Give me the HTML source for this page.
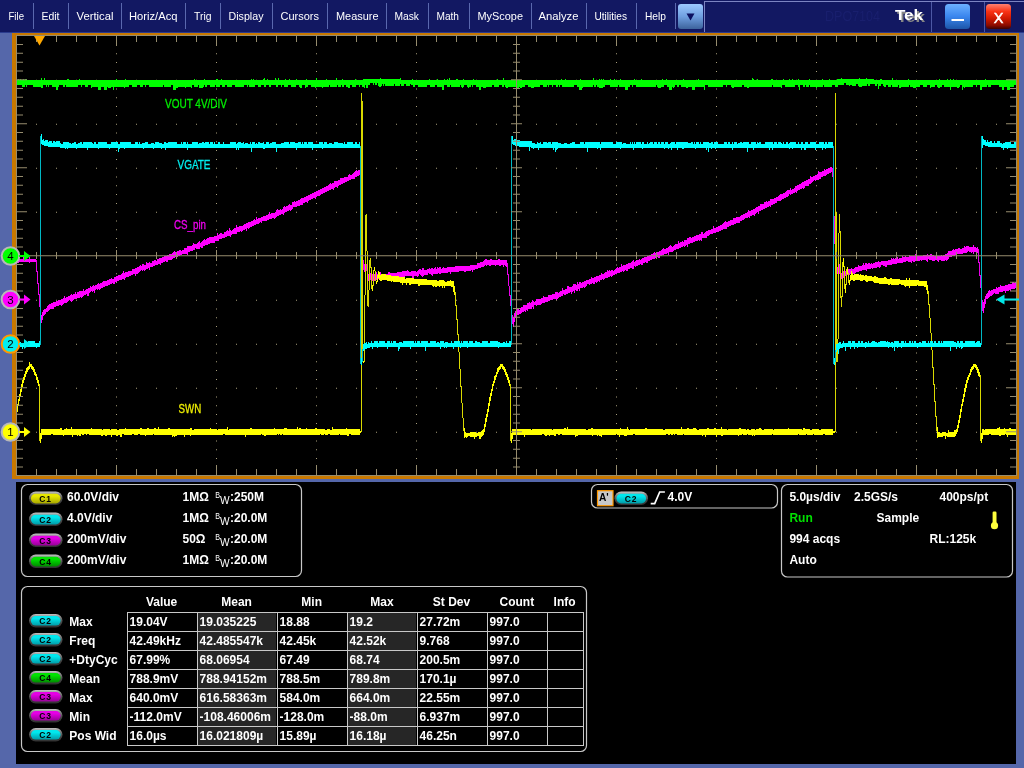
<!DOCTYPE html>
<html lang="en"><head><meta charset="utf-8"><title>Tek DPO7104</title>
<style>html,body{margin:0;padding:0;background:#5567aa;overflow:hidden}svg{display:block}text{font-family:"Liberation Sans", Arial, sans-serif}.m{font-size:11px;fill:#fff}.b{font-size:12px;font-weight:bold;fill:#fff}.pl{font-size:8.5px;font-weight:bold;fill:#000;letter-spacing:0.8px}.ce{shape-rendering:crispEdges}</style></head><body>
<svg width="1024" height="768" viewBox="0 0 1024 768" style="will-change:transform">
<defs>
<linearGradient id="gDrop" x1="0" y1="0" x2="0" y2="1"><stop offset="0" stop-color="#9cc8ff"/><stop offset="0.5" stop-color="#6f9fe0"/><stop offset="1" stop-color="#3d639c"/></linearGradient>
<linearGradient id="gMin" x1="0" y1="0" x2="0" y2="1"><stop offset="0" stop-color="#6cb0ff"/><stop offset="0.5" stop-color="#3a86ee"/><stop offset="1" stop-color="#1d55a8"/></linearGradient>
<linearGradient id="gCls" x1="0" y1="0" x2="0" y2="1"><stop offset="0" stop-color="#ff8070"/><stop offset="0.3" stop-color="#fa3214"/><stop offset="0.6" stop-color="#cc1800"/><stop offset="0.85" stop-color="#8c0c00"/><stop offset="1" stop-color="#400000"/></linearGradient>
<linearGradient id="gRim" x1="0" y1="0" x2="0" y2="1"><stop offset="0" stop-color="#c4c4c4"/><stop offset="0.3" stop-color="#7c7c7c"/><stop offset="0.6" stop-color="#484848"/><stop offset="1" stop-color="#303030"/></linearGradient>
<linearGradient id="gP1" x1="0" y1="0" x2="0" y2="1"><stop offset="0" stop-color="#e8e800"/><stop offset="0.25" stop-color="#e8e800"/><stop offset="1" stop-color="#a8a800"/></linearGradient>
<linearGradient id="gP2" x1="0" y1="0" x2="0" y2="1"><stop offset="0" stop-color="#00e8ee"/><stop offset="0.25" stop-color="#00e8ee"/><stop offset="1" stop-color="#009ca8"/></linearGradient>
<linearGradient id="gP3" x1="0" y1="0" x2="0" y2="1"><stop offset="0" stop-color="#e600e6"/><stop offset="0.25" stop-color="#e600e6"/><stop offset="1" stop-color="#980098"/></linearGradient>
<linearGradient id="gP4" x1="0" y1="0" x2="0" y2="1"><stop offset="0" stop-color="#00e200"/><stop offset="0.25" stop-color="#00e200"/><stop offset="1" stop-color="#008c00"/></linearGradient>
<filter id="sh" x="-10%" y="-10%" width="130%" height="140%"><feDropShadow dx="2" dy="2" stdDeviation="0.01" flood-color="#868686" flood-opacity="1"/></filter>
</defs>
<rect width="1024" height="768" fill="#5567aa"/>
<g class="ce">
<rect x="0" y="0" width="1024" height="32" fill="#121862"/>
<rect x="0" y="32" width="1024" height="1" fill="#2b3c8e"/>
<rect x="704" y="1" width="320" height="1" fill="#7c84c2"/>
<rect x="704" y="1" width="1" height="31" fill="#7c84c2"/>
<rect x="33" y="3" width="1" height="26" fill="#5a68ae"/>
<rect x="68" y="3" width="1" height="26" fill="#5a68ae"/>
<rect x="121" y="3" width="1" height="26" fill="#5a68ae"/>
<rect x="185" y="3" width="1" height="26" fill="#5a68ae"/>
<rect x="220" y="3" width="1" height="26" fill="#5a68ae"/>
<rect x="272" y="3" width="1" height="26" fill="#5a68ae"/>
<rect x="327" y="3" width="1" height="26" fill="#5a68ae"/>
<rect x="386" y="3" width="1" height="26" fill="#5a68ae"/>
<rect x="428" y="3" width="1" height="26" fill="#5a68ae"/>
<rect x="469" y="3" width="1" height="26" fill="#5a68ae"/>
<rect x="531" y="3" width="1" height="26" fill="#5a68ae"/>
<rect x="586" y="3" width="1" height="26" fill="#5a68ae"/>
<rect x="636" y="3" width="1" height="26" fill="#5a68ae"/>
<rect x="675" y="3" width="1" height="26" fill="#5a68ae"/>
<rect x="931" y="2" width="1" height="30" fill="#4c58a4"/>
<rect x="984" y="2" width="1" height="30" fill="#4c58a4"/>
</g>
<text class="m" x="8.5" y="19.8" textLength="15.5" lengthAdjust="spacingAndGlyphs">File</text>
<text class="m" x="41.5" y="19.8" textLength="18.0" lengthAdjust="spacingAndGlyphs">Edit</text>
<text class="m" x="76.5" y="19.8" textLength="37.0" lengthAdjust="spacingAndGlyphs">Vertical</text>
<text class="m" x="129.0" y="19.8" textLength="48.5" lengthAdjust="spacingAndGlyphs">Horiz/Acq</text>
<text class="m" x="194.0" y="19.8" textLength="17.5" lengthAdjust="spacingAndGlyphs">Trig</text>
<text class="m" x="228.5" y="19.8" textLength="35.0" lengthAdjust="spacingAndGlyphs">Display</text>
<text class="m" x="280.5" y="19.8" textLength="38.5" lengthAdjust="spacingAndGlyphs">Cursors</text>
<text class="m" x="336.0" y="19.8" textLength="42.5" lengthAdjust="spacingAndGlyphs">Measure</text>
<text class="m" x="394.5" y="19.8" textLength="24.5" lengthAdjust="spacingAndGlyphs">Mask</text>
<text class="m" x="436.5" y="19.8" textLength="22.5" lengthAdjust="spacingAndGlyphs">Math</text>
<text class="m" x="477.5" y="19.8" textLength="45.5" lengthAdjust="spacingAndGlyphs">MyScope</text>
<text class="m" x="538.5" y="19.8" textLength="40.0" lengthAdjust="spacingAndGlyphs">Analyze</text>
<text class="m" x="594.5" y="19.8" textLength="32.5" lengthAdjust="spacingAndGlyphs">Utilities</text>
<text class="m" x="645.0" y="19.8" textLength="21.0" lengthAdjust="spacingAndGlyphs">Help</text>
<rect x="678" y="4" width="25" height="25" rx="3" fill="url(#gDrop)"/>
<path d="M686.5 13.5h8l-4 7z" fill="#0c1060"/>
<text x="825" y="21" font-size="14" fill="#191f6e" textLength="55" lengthAdjust="spacingAndGlyphs">DPO7104</text>
<text x="895" y="19.5" font-size="15" font-weight="bold" fill="#ffffff" filter="url(#sh)" textLength="28" lengthAdjust="spacingAndGlyphs">Tek</text>
<rect x="945" y="4" width="25" height="25" rx="3.5" fill="url(#gMin)"/>
<rect x="951.5" y="19" width="12.5" height="2" fill="#fff"/>
<rect x="986" y="4" width="25" height="25" rx="3.5" fill="url(#gCls)"/>
<text x="998.5" y="22.7" font-size="14.5" fill="#fff" stroke="#fff" stroke-width="0.45" text-anchor="middle">X</text>
<g class="ce">
<rect x="12" y="33" width="1007" height="446" fill="#c87800"/>
<rect x="16" y="35" width="1001" height="441" fill="#968c6e"/>
<rect x="17" y="36" width="999" height="439" fill="#000"/>
<rect x="16" y="482" width="1000" height="282" fill="#000"/>
</g>
<path d="M36 79.7h1v1h-1zM56 79.7h1v1h-1zM76 79.7h1v1h-1zM96 79.7h1v1h-1zM116 79.7h1v1h-1zM136 79.7h1v1h-1zM156 79.7h1v1h-1zM176 79.7h1v1h-1zM196 79.7h1v1h-1zM216 79.7h1v1h-1zM236 79.7h1v1h-1zM256 79.7h1v1h-1zM276 79.7h1v1h-1zM296 79.7h1v1h-1zM316 79.7h1v1h-1zM336 79.7h1v1h-1zM356 79.7h1v1h-1zM376 79.7h1v1h-1zM396 79.7h1v1h-1zM416 79.7h1v1h-1zM436 79.7h1v1h-1zM456 79.7h1v1h-1zM476 79.7h1v1h-1zM496 79.7h1v1h-1zM516 79.7h1v1h-1zM536 79.7h1v1h-1zM556 79.7h1v1h-1zM576 79.7h1v1h-1zM596 79.7h1v1h-1zM616 79.7h1v1h-1zM636 79.7h1v1h-1zM656 79.7h1v1h-1zM676 79.7h1v1h-1zM696 79.7h1v1h-1zM716 79.7h1v1h-1zM736 79.7h1v1h-1zM756 79.7h1v1h-1zM776 79.7h1v1h-1zM796 79.7h1v1h-1zM816 79.7h1v1h-1zM836 79.7h1v1h-1zM856 79.7h1v1h-1zM876 79.7h1v1h-1zM896 79.7h1v1h-1zM916 79.7h1v1h-1zM936 79.7h1v1h-1zM956 79.7h1v1h-1zM976 79.7h1v1h-1zM996 79.7h1v1h-1zM36 123.7h1v1h-1zM56 123.7h1v1h-1zM76 123.7h1v1h-1zM96 123.7h1v1h-1zM116 123.7h1v1h-1zM136 123.7h1v1h-1zM156 123.7h1v1h-1zM176 123.7h1v1h-1zM196 123.7h1v1h-1zM216 123.7h1v1h-1zM236 123.7h1v1h-1zM256 123.7h1v1h-1zM276 123.7h1v1h-1zM296 123.7h1v1h-1zM316 123.7h1v1h-1zM336 123.7h1v1h-1zM356 123.7h1v1h-1zM376 123.7h1v1h-1zM396 123.7h1v1h-1zM416 123.7h1v1h-1zM436 123.7h1v1h-1zM456 123.7h1v1h-1zM476 123.7h1v1h-1zM496 123.7h1v1h-1zM516 123.7h1v1h-1zM536 123.7h1v1h-1zM556 123.7h1v1h-1zM576 123.7h1v1h-1zM596 123.7h1v1h-1zM616 123.7h1v1h-1zM636 123.7h1v1h-1zM656 123.7h1v1h-1zM676 123.7h1v1h-1zM696 123.7h1v1h-1zM716 123.7h1v1h-1zM736 123.7h1v1h-1zM756 123.7h1v1h-1zM776 123.7h1v1h-1zM796 123.7h1v1h-1zM816 123.7h1v1h-1zM836 123.7h1v1h-1zM856 123.7h1v1h-1zM876 123.7h1v1h-1zM896 123.7h1v1h-1zM916 123.7h1v1h-1zM936 123.7h1v1h-1zM956 123.7h1v1h-1zM976 123.7h1v1h-1zM996 123.7h1v1h-1zM36 167.7h1v1h-1zM56 167.7h1v1h-1zM76 167.7h1v1h-1zM96 167.7h1v1h-1zM116 167.7h1v1h-1zM136 167.7h1v1h-1zM156 167.7h1v1h-1zM176 167.7h1v1h-1zM196 167.7h1v1h-1zM216 167.7h1v1h-1zM236 167.7h1v1h-1zM256 167.7h1v1h-1zM276 167.7h1v1h-1zM296 167.7h1v1h-1zM316 167.7h1v1h-1zM336 167.7h1v1h-1zM356 167.7h1v1h-1zM376 167.7h1v1h-1zM396 167.7h1v1h-1zM416 167.7h1v1h-1zM436 167.7h1v1h-1zM456 167.7h1v1h-1zM476 167.7h1v1h-1zM496 167.7h1v1h-1zM516 167.7h1v1h-1zM536 167.7h1v1h-1zM556 167.7h1v1h-1zM576 167.7h1v1h-1zM596 167.7h1v1h-1zM616 167.7h1v1h-1zM636 167.7h1v1h-1zM656 167.7h1v1h-1zM676 167.7h1v1h-1zM696 167.7h1v1h-1zM716 167.7h1v1h-1zM736 167.7h1v1h-1zM756 167.7h1v1h-1zM776 167.7h1v1h-1zM796 167.7h1v1h-1zM816 167.7h1v1h-1zM836 167.7h1v1h-1zM856 167.7h1v1h-1zM876 167.7h1v1h-1zM896 167.7h1v1h-1zM916 167.7h1v1h-1zM936 167.7h1v1h-1zM956 167.7h1v1h-1zM976 167.7h1v1h-1zM996 167.7h1v1h-1zM36 211.7h1v1h-1zM56 211.7h1v1h-1zM76 211.7h1v1h-1zM96 211.7h1v1h-1zM116 211.7h1v1h-1zM136 211.7h1v1h-1zM156 211.7h1v1h-1zM176 211.7h1v1h-1zM196 211.7h1v1h-1zM216 211.7h1v1h-1zM236 211.7h1v1h-1zM256 211.7h1v1h-1zM276 211.7h1v1h-1zM296 211.7h1v1h-1zM316 211.7h1v1h-1zM336 211.7h1v1h-1zM356 211.7h1v1h-1zM376 211.7h1v1h-1zM396 211.7h1v1h-1zM416 211.7h1v1h-1zM436 211.7h1v1h-1zM456 211.7h1v1h-1zM476 211.7h1v1h-1zM496 211.7h1v1h-1zM516 211.7h1v1h-1zM536 211.7h1v1h-1zM556 211.7h1v1h-1zM576 211.7h1v1h-1zM596 211.7h1v1h-1zM616 211.7h1v1h-1zM636 211.7h1v1h-1zM656 211.7h1v1h-1zM676 211.7h1v1h-1zM696 211.7h1v1h-1zM716 211.7h1v1h-1zM736 211.7h1v1h-1zM756 211.7h1v1h-1zM776 211.7h1v1h-1zM796 211.7h1v1h-1zM816 211.7h1v1h-1zM836 211.7h1v1h-1zM856 211.7h1v1h-1zM876 211.7h1v1h-1zM896 211.7h1v1h-1zM916 211.7h1v1h-1zM936 211.7h1v1h-1zM956 211.7h1v1h-1zM976 211.7h1v1h-1zM996 211.7h1v1h-1zM36 299.7h1v1h-1zM56 299.7h1v1h-1zM76 299.7h1v1h-1zM96 299.7h1v1h-1zM116 299.7h1v1h-1zM136 299.7h1v1h-1zM156 299.7h1v1h-1zM176 299.7h1v1h-1zM196 299.7h1v1h-1zM216 299.7h1v1h-1zM236 299.7h1v1h-1zM256 299.7h1v1h-1zM276 299.7h1v1h-1zM296 299.7h1v1h-1zM316 299.7h1v1h-1zM336 299.7h1v1h-1zM356 299.7h1v1h-1zM376 299.7h1v1h-1zM396 299.7h1v1h-1zM416 299.7h1v1h-1zM436 299.7h1v1h-1zM456 299.7h1v1h-1zM476 299.7h1v1h-1zM496 299.7h1v1h-1zM516 299.7h1v1h-1zM536 299.7h1v1h-1zM556 299.7h1v1h-1zM576 299.7h1v1h-1zM596 299.7h1v1h-1zM616 299.7h1v1h-1zM636 299.7h1v1h-1zM656 299.7h1v1h-1zM676 299.7h1v1h-1zM696 299.7h1v1h-1zM716 299.7h1v1h-1zM736 299.7h1v1h-1zM756 299.7h1v1h-1zM776 299.7h1v1h-1zM796 299.7h1v1h-1zM816 299.7h1v1h-1zM836 299.7h1v1h-1zM856 299.7h1v1h-1zM876 299.7h1v1h-1zM896 299.7h1v1h-1zM916 299.7h1v1h-1zM936 299.7h1v1h-1zM956 299.7h1v1h-1zM976 299.7h1v1h-1zM996 299.7h1v1h-1zM36 343.7h1v1h-1zM56 343.7h1v1h-1zM76 343.7h1v1h-1zM96 343.7h1v1h-1zM116 343.7h1v1h-1zM136 343.7h1v1h-1zM156 343.7h1v1h-1zM176 343.7h1v1h-1zM196 343.7h1v1h-1zM216 343.7h1v1h-1zM236 343.7h1v1h-1zM256 343.7h1v1h-1zM276 343.7h1v1h-1zM296 343.7h1v1h-1zM316 343.7h1v1h-1zM336 343.7h1v1h-1zM356 343.7h1v1h-1zM376 343.7h1v1h-1zM396 343.7h1v1h-1zM416 343.7h1v1h-1zM436 343.7h1v1h-1zM456 343.7h1v1h-1zM476 343.7h1v1h-1zM496 343.7h1v1h-1zM516 343.7h1v1h-1zM536 343.7h1v1h-1zM556 343.7h1v1h-1zM576 343.7h1v1h-1zM596 343.7h1v1h-1zM616 343.7h1v1h-1zM636 343.7h1v1h-1zM656 343.7h1v1h-1zM676 343.7h1v1h-1zM696 343.7h1v1h-1zM716 343.7h1v1h-1zM736 343.7h1v1h-1zM756 343.7h1v1h-1zM776 343.7h1v1h-1zM796 343.7h1v1h-1zM816 343.7h1v1h-1zM836 343.7h1v1h-1zM856 343.7h1v1h-1zM876 343.7h1v1h-1zM896 343.7h1v1h-1zM916 343.7h1v1h-1zM936 343.7h1v1h-1zM956 343.7h1v1h-1zM976 343.7h1v1h-1zM996 343.7h1v1h-1zM36 387.7h1v1h-1zM56 387.7h1v1h-1zM76 387.7h1v1h-1zM96 387.7h1v1h-1zM116 387.7h1v1h-1zM136 387.7h1v1h-1zM156 387.7h1v1h-1zM176 387.7h1v1h-1zM196 387.7h1v1h-1zM216 387.7h1v1h-1zM236 387.7h1v1h-1zM256 387.7h1v1h-1zM276 387.7h1v1h-1zM296 387.7h1v1h-1zM316 387.7h1v1h-1zM336 387.7h1v1h-1zM356 387.7h1v1h-1zM376 387.7h1v1h-1zM396 387.7h1v1h-1zM416 387.7h1v1h-1zM436 387.7h1v1h-1zM456 387.7h1v1h-1zM476 387.7h1v1h-1zM496 387.7h1v1h-1zM516 387.7h1v1h-1zM536 387.7h1v1h-1zM556 387.7h1v1h-1zM576 387.7h1v1h-1zM596 387.7h1v1h-1zM616 387.7h1v1h-1zM636 387.7h1v1h-1zM656 387.7h1v1h-1zM676 387.7h1v1h-1zM696 387.7h1v1h-1zM716 387.7h1v1h-1zM736 387.7h1v1h-1zM756 387.7h1v1h-1zM776 387.7h1v1h-1zM796 387.7h1v1h-1zM816 387.7h1v1h-1zM836 387.7h1v1h-1zM856 387.7h1v1h-1zM876 387.7h1v1h-1zM896 387.7h1v1h-1zM916 387.7h1v1h-1zM936 387.7h1v1h-1zM956 387.7h1v1h-1zM976 387.7h1v1h-1zM996 387.7h1v1h-1zM36 431.7h1v1h-1zM56 431.7h1v1h-1zM76 431.7h1v1h-1zM96 431.7h1v1h-1zM116 431.7h1v1h-1zM136 431.7h1v1h-1zM156 431.7h1v1h-1zM176 431.7h1v1h-1zM196 431.7h1v1h-1zM216 431.7h1v1h-1zM236 431.7h1v1h-1zM256 431.7h1v1h-1zM276 431.7h1v1h-1zM296 431.7h1v1h-1zM316 431.7h1v1h-1zM336 431.7h1v1h-1zM356 431.7h1v1h-1zM376 431.7h1v1h-1zM396 431.7h1v1h-1zM416 431.7h1v1h-1zM436 431.7h1v1h-1zM456 431.7h1v1h-1zM476 431.7h1v1h-1zM496 431.7h1v1h-1zM516 431.7h1v1h-1zM536 431.7h1v1h-1zM556 431.7h1v1h-1zM576 431.7h1v1h-1zM596 431.7h1v1h-1zM616 431.7h1v1h-1zM636 431.7h1v1h-1zM656 431.7h1v1h-1zM676 431.7h1v1h-1zM696 431.7h1v1h-1zM716 431.7h1v1h-1zM736 431.7h1v1h-1zM756 431.7h1v1h-1zM776 431.7h1v1h-1zM796 431.7h1v1h-1zM816 431.7h1v1h-1zM836 431.7h1v1h-1zM856 431.7h1v1h-1zM876 431.7h1v1h-1zM896 431.7h1v1h-1zM916 431.7h1v1h-1zM936 431.7h1v1h-1zM956 431.7h1v1h-1zM976 431.7h1v1h-1zM996 431.7h1v1h-1zM116 44.5h1v1h-1zM116 53.3h1v1h-1zM116 62.1h1v1h-1zM116 70.9h1v1h-1zM116 88.5h1v1h-1zM116 97.3h1v1h-1zM116 106.1h1v1h-1zM116 114.9h1v1h-1zM116 132.5h1v1h-1zM116 141.3h1v1h-1zM116 150.1h1v1h-1zM116 158.9h1v1h-1zM116 176.5h1v1h-1zM116 185.3h1v1h-1zM116 194.1h1v1h-1zM116 202.9h1v1h-1zM116 220.5h1v1h-1zM116 229.3h1v1h-1zM116 238.1h1v1h-1zM116 246.9h1v1h-1zM116 264.5h1v1h-1zM116 273.3h1v1h-1zM116 282.1h1v1h-1zM116 290.9h1v1h-1zM116 308.5h1v1h-1zM116 317.3h1v1h-1zM116 326.1h1v1h-1zM116 334.9h1v1h-1zM116 352.5h1v1h-1zM116 361.3h1v1h-1zM116 370.1h1v1h-1zM116 378.9h1v1h-1zM116 396.5h1v1h-1zM116 405.3h1v1h-1zM116 414.1h1v1h-1zM116 422.9h1v1h-1zM116 440.5h1v1h-1zM116 449.3h1v1h-1zM116 458.1h1v1h-1zM116 466.9h1v1h-1zM216 44.5h1v1h-1zM216 53.3h1v1h-1zM216 62.1h1v1h-1zM216 70.9h1v1h-1zM216 88.5h1v1h-1zM216 97.3h1v1h-1zM216 106.1h1v1h-1zM216 114.9h1v1h-1zM216 132.5h1v1h-1zM216 141.3h1v1h-1zM216 150.1h1v1h-1zM216 158.9h1v1h-1zM216 176.5h1v1h-1zM216 185.3h1v1h-1zM216 194.1h1v1h-1zM216 202.9h1v1h-1zM216 220.5h1v1h-1zM216 229.3h1v1h-1zM216 238.1h1v1h-1zM216 246.9h1v1h-1zM216 264.5h1v1h-1zM216 273.3h1v1h-1zM216 282.1h1v1h-1zM216 290.9h1v1h-1zM216 308.5h1v1h-1zM216 317.3h1v1h-1zM216 326.1h1v1h-1zM216 334.9h1v1h-1zM216 352.5h1v1h-1zM216 361.3h1v1h-1zM216 370.1h1v1h-1zM216 378.9h1v1h-1zM216 396.5h1v1h-1zM216 405.3h1v1h-1zM216 414.1h1v1h-1zM216 422.9h1v1h-1zM216 440.5h1v1h-1zM216 449.3h1v1h-1zM216 458.1h1v1h-1zM216 466.9h1v1h-1zM316 44.5h1v1h-1zM316 53.3h1v1h-1zM316 62.1h1v1h-1zM316 70.9h1v1h-1zM316 88.5h1v1h-1zM316 97.3h1v1h-1zM316 106.1h1v1h-1zM316 114.9h1v1h-1zM316 132.5h1v1h-1zM316 141.3h1v1h-1zM316 150.1h1v1h-1zM316 158.9h1v1h-1zM316 176.5h1v1h-1zM316 185.3h1v1h-1zM316 194.1h1v1h-1zM316 202.9h1v1h-1zM316 220.5h1v1h-1zM316 229.3h1v1h-1zM316 238.1h1v1h-1zM316 246.9h1v1h-1zM316 264.5h1v1h-1zM316 273.3h1v1h-1zM316 282.1h1v1h-1zM316 290.9h1v1h-1zM316 308.5h1v1h-1zM316 317.3h1v1h-1zM316 326.1h1v1h-1zM316 334.9h1v1h-1zM316 352.5h1v1h-1zM316 361.3h1v1h-1zM316 370.1h1v1h-1zM316 378.9h1v1h-1zM316 396.5h1v1h-1zM316 405.3h1v1h-1zM316 414.1h1v1h-1zM316 422.9h1v1h-1zM316 440.5h1v1h-1zM316 449.3h1v1h-1zM316 458.1h1v1h-1zM316 466.9h1v1h-1zM416 44.5h1v1h-1zM416 53.3h1v1h-1zM416 62.1h1v1h-1zM416 70.9h1v1h-1zM416 88.5h1v1h-1zM416 97.3h1v1h-1zM416 106.1h1v1h-1zM416 114.9h1v1h-1zM416 132.5h1v1h-1zM416 141.3h1v1h-1zM416 150.1h1v1h-1zM416 158.9h1v1h-1zM416 176.5h1v1h-1zM416 185.3h1v1h-1zM416 194.1h1v1h-1zM416 202.9h1v1h-1zM416 220.5h1v1h-1zM416 229.3h1v1h-1zM416 238.1h1v1h-1zM416 246.9h1v1h-1zM416 264.5h1v1h-1zM416 273.3h1v1h-1zM416 282.1h1v1h-1zM416 290.9h1v1h-1zM416 308.5h1v1h-1zM416 317.3h1v1h-1zM416 326.1h1v1h-1zM416 334.9h1v1h-1zM416 352.5h1v1h-1zM416 361.3h1v1h-1zM416 370.1h1v1h-1zM416 378.9h1v1h-1zM416 396.5h1v1h-1zM416 405.3h1v1h-1zM416 414.1h1v1h-1zM416 422.9h1v1h-1zM416 440.5h1v1h-1zM416 449.3h1v1h-1zM416 458.1h1v1h-1zM416 466.9h1v1h-1zM616 44.5h1v1h-1zM616 53.3h1v1h-1zM616 62.1h1v1h-1zM616 70.9h1v1h-1zM616 88.5h1v1h-1zM616 97.3h1v1h-1zM616 106.1h1v1h-1zM616 114.9h1v1h-1zM616 132.5h1v1h-1zM616 141.3h1v1h-1zM616 150.1h1v1h-1zM616 158.9h1v1h-1zM616 176.5h1v1h-1zM616 185.3h1v1h-1zM616 194.1h1v1h-1zM616 202.9h1v1h-1zM616 220.5h1v1h-1zM616 229.3h1v1h-1zM616 238.1h1v1h-1zM616 246.9h1v1h-1zM616 264.5h1v1h-1zM616 273.3h1v1h-1zM616 282.1h1v1h-1zM616 290.9h1v1h-1zM616 308.5h1v1h-1zM616 317.3h1v1h-1zM616 326.1h1v1h-1zM616 334.9h1v1h-1zM616 352.5h1v1h-1zM616 361.3h1v1h-1zM616 370.1h1v1h-1zM616 378.9h1v1h-1zM616 396.5h1v1h-1zM616 405.3h1v1h-1zM616 414.1h1v1h-1zM616 422.9h1v1h-1zM616 440.5h1v1h-1zM616 449.3h1v1h-1zM616 458.1h1v1h-1zM616 466.9h1v1h-1zM716 44.5h1v1h-1zM716 53.3h1v1h-1zM716 62.1h1v1h-1zM716 70.9h1v1h-1zM716 88.5h1v1h-1zM716 97.3h1v1h-1zM716 106.1h1v1h-1zM716 114.9h1v1h-1zM716 132.5h1v1h-1zM716 141.3h1v1h-1zM716 150.1h1v1h-1zM716 158.9h1v1h-1zM716 176.5h1v1h-1zM716 185.3h1v1h-1zM716 194.1h1v1h-1zM716 202.9h1v1h-1zM716 220.5h1v1h-1zM716 229.3h1v1h-1zM716 238.1h1v1h-1zM716 246.9h1v1h-1zM716 264.5h1v1h-1zM716 273.3h1v1h-1zM716 282.1h1v1h-1zM716 290.9h1v1h-1zM716 308.5h1v1h-1zM716 317.3h1v1h-1zM716 326.1h1v1h-1zM716 334.9h1v1h-1zM716 352.5h1v1h-1zM716 361.3h1v1h-1zM716 370.1h1v1h-1zM716 378.9h1v1h-1zM716 396.5h1v1h-1zM716 405.3h1v1h-1zM716 414.1h1v1h-1zM716 422.9h1v1h-1zM716 440.5h1v1h-1zM716 449.3h1v1h-1zM716 458.1h1v1h-1zM716 466.9h1v1h-1zM816 44.5h1v1h-1zM816 53.3h1v1h-1zM816 62.1h1v1h-1zM816 70.9h1v1h-1zM816 88.5h1v1h-1zM816 97.3h1v1h-1zM816 106.1h1v1h-1zM816 114.9h1v1h-1zM816 132.5h1v1h-1zM816 141.3h1v1h-1zM816 150.1h1v1h-1zM816 158.9h1v1h-1zM816 176.5h1v1h-1zM816 185.3h1v1h-1zM816 194.1h1v1h-1zM816 202.9h1v1h-1zM816 220.5h1v1h-1zM816 229.3h1v1h-1zM816 238.1h1v1h-1zM816 246.9h1v1h-1zM816 264.5h1v1h-1zM816 273.3h1v1h-1zM816 282.1h1v1h-1zM816 290.9h1v1h-1zM816 308.5h1v1h-1zM816 317.3h1v1h-1zM816 326.1h1v1h-1zM816 334.9h1v1h-1zM816 352.5h1v1h-1zM816 361.3h1v1h-1zM816 370.1h1v1h-1zM816 378.9h1v1h-1zM816 396.5h1v1h-1zM816 405.3h1v1h-1zM816 414.1h1v1h-1zM816 422.9h1v1h-1zM816 440.5h1v1h-1zM816 449.3h1v1h-1zM816 458.1h1v1h-1zM816 466.9h1v1h-1zM916 44.5h1v1h-1zM916 53.3h1v1h-1zM916 62.1h1v1h-1zM916 70.9h1v1h-1zM916 88.5h1v1h-1zM916 97.3h1v1h-1zM916 106.1h1v1h-1zM916 114.9h1v1h-1zM916 132.5h1v1h-1zM916 141.3h1v1h-1zM916 150.1h1v1h-1zM916 158.9h1v1h-1zM916 176.5h1v1h-1zM916 185.3h1v1h-1zM916 194.1h1v1h-1zM916 202.9h1v1h-1zM916 220.5h1v1h-1zM916 229.3h1v1h-1zM916 238.1h1v1h-1zM916 246.9h1v1h-1zM916 264.5h1v1h-1zM916 273.3h1v1h-1zM916 282.1h1v1h-1zM916 290.9h1v1h-1zM916 308.5h1v1h-1zM916 317.3h1v1h-1zM916 326.1h1v1h-1zM916 334.9h1v1h-1zM916 352.5h1v1h-1zM916 361.3h1v1h-1zM916 370.1h1v1h-1zM916 378.9h1v1h-1zM916 396.5h1v1h-1zM916 405.3h1v1h-1zM916 414.1h1v1h-1zM916 422.9h1v1h-1zM916 440.5h1v1h-1zM916 449.3h1v1h-1zM916 458.1h1v1h-1zM916 466.9h1v1h-1z" fill="#a89e7c"/>
<g class="ce">
<path d="M17 80h1v5h-1zM18 79h1v6h-1zM19 80h1v5h-1zM20 79h1v6h-1zM21 80h1v5h-1zM22 80h1v7h-1zM23 79h1v8h-1zM24 80h1v7h-1zM25 79h1v6h-1zM26 79h1v8h-1zM27 80h6v5h-6zM33 80h8v7h-8zM41 78h1v10h-1zM42 80h1v8h-1zM43 80h1v5h-1zM44 78h1v7h-1zM45 80h1v5h-1zM46 80h1v7h-1zM47 80h1v5h-1zM48 80h1v7h-1zM49 80h3v5h-3zM52 80h4v7h-4zM56 80h2v10h-2zM58 80h1v7h-1zM59 80h4v5h-4zM63 80h2v7h-2zM65 80h1v5h-1zM66 80h1v7h-1zM67 79h2v8h-2zM69 80h9v7h-9zM78 80h1v5h-1zM79 79h1v6h-1zM80 80h1v5h-1zM81 80h1v7h-1zM82 80h3v5h-3zM85 80h3v7h-3zM88 80h3v5h-3zM91 80h1v8h-1zM92 80h6v7h-6zM98 80h3v10h-3zM101 80h3v7h-3zM104 80h3v10h-3zM107 80h1v7h-1zM108 80h3v8h-3zM111 80h2v7h-2zM113 80h1v10h-1zM114 80h2v7h-2zM116 79h1v8h-1zM117 80h7v7h-7zM124 80h1v8h-1zM125 79h1v8h-1zM126 80h3v7h-3zM129 80h3v5h-3zM132 80h5v7h-5zM137 80h3v5h-3zM140 80h3v7h-3zM143 80h2v5h-2zM145 80h1v7h-1zM146 80h3v5h-3zM149 80h14v7h-14zM163 80h1v5h-1zM164 80h7v7h-7zM171 80h2v5h-2zM173 80h3v10h-3zM176 80h2v8h-2zM178 80h7v7h-7zM185 80h1v8h-1zM186 80h5v7h-5zM191 80h1v8h-1zM192 80h2v5h-2zM194 79h1v8h-1zM195 80h3v7h-3zM198 80h1v5h-1zM199 80h4v8h-4zM203 80h1v7h-1zM204 79h1v6h-1zM205 80h2v7h-2zM207 80h3v5h-3zM210 80h5v7h-5zM215 80h1v5h-1zM216 79h2v8h-2zM218 80h2v7h-2zM220 80h1v5h-1zM221 79h1v6h-1zM222 80h3v7h-3zM225 80h2v5h-2zM227 80h5v7h-5zM232 80h3v5h-3zM235 80h9v7h-9zM244 80h3v5h-3zM247 80h1v7h-1zM248 80h1v5h-1zM249 80h2v7h-2zM251 79h1v8h-1zM252 80h1v7h-1zM253 79h1v8h-1zM254 80h1v7h-1zM255 80h3v5h-3zM258 80h3v7h-3zM261 80h2v5h-2zM263 79h1v6h-1zM264 78h1v9h-1zM265 80h1v7h-1zM266 80h1v5h-1zM267 79h1v6h-1zM268 80h1v5h-1zM269 80h2v7h-2zM271 80h4v5h-4zM275 78h1v7h-1zM276 80h2v7h-2zM278 78h1v7h-1zM279 80h2v5h-2zM281 80h1v7h-1zM282 80h2v5h-2zM284 80h1v7h-1zM285 79h1v8h-1zM286 80h2v7h-2zM288 80h1v5h-1zM289 79h1v6h-1zM290 80h1v5h-1zM291 80h5v7h-5zM296 79h1v6h-1zM297 80h2v5h-2zM299 80h1v7h-1zM300 80h2v8h-2zM302 80h3v5h-3zM305 80h1v8h-1zM306 79h1v8h-1zM307 80h1v7h-1zM308 80h3v5h-3zM311 80h4v7h-4zM315 80h1v8h-1zM316 78h1v9h-1zM317 80h5v7h-5zM322 80h1v8h-1zM323 80h3v7h-3zM326 79h1v8h-1zM327 80h2v7h-2zM329 80h1v5h-1zM330 80h6v7h-6zM336 78h1v9h-1zM337 80h1v5h-1zM338 80h3v7h-3zM341 80h1v5h-1zM342 79h1v8h-1zM343 80h1v7h-1zM344 80h2v5h-2zM346 80h2v7h-2zM348 80h2v8h-2zM350 80h2v5h-2zM352 80h3v7h-3zM355 79h1v8h-1zM356 80h3v5h-3zM359 80h1v7h-1zM360 80h2v5h-2zM362 80h1v7h-1zM363 79h1v8h-1zM364 79h1v9h-1zM365 79h1v6h-1zM366 79h2v9h-2zM368 79h2v6h-2zM370 79h3v4h-3zM373 79h1v6h-1zM374 79h1v4h-1zM375 79h2v6h-2zM377 79h1v4h-1zM378 79h1v7h-1zM379 79h1v8h-1zM380 78h1v9h-1zM381 79h1v7h-1zM382 79h1v5h-1zM383 79h1v7h-1zM384 79h1v5h-1zM385 79h9v7h-9zM394 79h1v5h-1zM395 79h5v7h-5zM400 78h1v6h-1zM401 80h3v6h-3zM404 80h2v4h-2zM406 80h4v6h-4zM410 80h1v4h-1zM411 80h1v5h-1zM412 79h1v6h-1zM413 80h2v7h-2zM415 80h3v5h-3zM418 80h9v7h-9zM427 80h2v5h-2zM429 79h1v6h-1zM430 80h5v7h-5zM435 80h2v5h-2zM437 79h1v8h-1zM438 80h4v7h-4zM442 80h2v10h-2zM444 79h1v6h-1zM445 80h2v5h-2zM447 79h1v8h-1zM448 80h1v7h-1zM449 78h1v9h-1zM450 80h1v5h-1zM451 80h5v7h-5zM456 79h2v8h-2zM458 80h2v7h-2zM460 80h1v5h-1zM461 80h1v7h-1zM462 80h1v8h-1zM463 79h1v8h-1zM464 80h3v5h-3zM467 80h1v7h-1zM468 80h1v8h-1zM469 80h2v7h-2zM471 80h1v5h-1zM472 80h1v7h-1zM473 79h1v6h-1zM474 80h2v5h-2zM476 80h3v7h-3zM479 80h2v10h-2zM481 80h2v7h-2zM483 80h3v8h-3zM486 80h6v7h-6zM492 80h2v5h-2zM494 80h3v7h-3zM497 79h1v8h-1zM498 80h1v7h-1zM499 80h3v5h-3zM502 80h1v7h-1zM503 78h1v9h-1zM504 80h1v5h-1zM505 80h1v7h-1zM506 80h2v8h-2zM508 80h9v7h-9zM517 80h2v8h-2zM519 80h1v7h-1zM520 80h2v8h-2zM522 80h3v7h-3zM525 80h3v5h-3zM528 80h3v7h-3zM531 80h3v8h-3zM534 80h6v7h-6zM540 80h3v5h-3zM543 80h4v7h-4zM547 80h1v5h-1zM548 80h1v7h-1zM549 80h3v5h-3zM552 80h1v7h-1zM553 80h3v5h-3zM556 80h2v7h-2zM558 80h1v5h-1zM559 80h1v7h-1zM560 80h1v5h-1zM561 79h1v6h-1zM562 80h3v7h-3zM565 79h1v8h-1zM566 80h8v7h-8zM574 80h3v5h-3zM577 80h2v7h-2zM579 80h1v10h-1zM580 79h1v11h-1zM581 80h1v10h-1zM582 80h1v8h-1zM583 80h10v7h-10zM593 78h1v7h-1zM594 80h2v7h-2zM596 80h1v5h-1zM597 80h2v7h-2zM599 79h1v9h-1zM600 80h1v8h-1zM601 79h1v9h-1zM602 80h1v8h-1zM603 79h1v8h-1zM604 80h1v7h-1zM605 80h5v5h-5zM610 79h1v8h-1zM611 80h3v7h-3zM614 79h1v8h-1zM615 80h3v7h-3zM618 80h1v5h-1zM619 80h1v7h-1zM620 79h1v8h-1zM621 80h4v7h-4zM625 80h3v10h-3zM628 80h2v7h-2zM630 80h2v5h-2zM632 80h1v7h-1zM633 80h1v5h-1zM634 79h1v6h-1zM635 80h1v5h-1zM636 80h5v7h-5zM641 79h1v8h-1zM642 80h14v7h-14zM656 80h1v5h-1zM657 80h1v7h-1zM658 80h3v8h-3zM661 80h1v7h-1zM662 79h1v8h-1zM663 80h1v7h-1zM664 80h2v5h-2zM666 79h1v6h-1zM667 80h2v7h-2zM669 80h3v10h-3zM672 80h1v7h-1zM673 80h1v8h-1zM674 80h1v7h-1zM675 80h2v5h-2zM677 80h2v7h-2zM679 80h2v5h-2zM681 80h2v7h-2zM683 79h1v8h-1zM684 80h2v7h-2zM686 80h2v8h-2zM688 80h4v7h-4zM692 80h3v10h-3zM695 80h3v7h-3zM698 79h1v8h-1zM699 80h5v7h-5zM704 80h1v10h-1zM705 80h3v5h-3zM708 80h15v7h-15zM723 80h3v5h-3zM726 80h1v7h-1zM727 80h4v5h-4zM731 80h1v7h-1zM732 80h2v8h-2zM734 80h8v7h-8zM742 80h2v5h-2zM744 80h3v7h-3zM747 80h2v8h-2zM749 80h3v7h-3zM752 78h1v9h-1zM753 79h1v8h-1zM754 80h3v7h-3zM757 79h1v8h-1zM758 80h13v7h-13zM771 79h1v8h-1zM772 79h1v6h-1zM773 80h8v7h-8zM781 80h1v8h-1zM782 80h1v5h-1zM783 79h1v6h-1zM784 80h1v5h-1zM785 80h4v7h-4zM789 79h1v8h-1zM790 80h2v7h-2zM792 79h1v8h-1zM793 80h2v7h-2zM795 80h3v5h-3zM798 79h1v8h-1zM799 80h1v10h-1zM800 80h3v5h-3zM803 80h2v7h-2zM805 80h1v5h-1zM806 80h3v7h-3zM809 79h1v6h-1zM810 80h6v7h-6zM816 80h1v8h-1zM817 80h5v7h-5zM822 79h1v8h-1zM823 80h1v5h-1zM824 80h5v7h-5zM829 79h1v8h-1zM830 80h2v7h-2zM832 80h3v5h-3zM835 80h2v7h-2zM837 79h1v8h-1zM838 79h3v6h-3zM841 78h1v7h-1zM842 79h2v6h-2zM844 79h2v4h-2zM846 79h3v6h-3zM849 79h1v7h-1zM850 79h2v6h-2zM852 79h4v7h-4zM856 79h2v5h-2zM858 79h1v7h-1zM859 78h1v9h-1zM860 79h2v8h-2zM862 79h4v7h-4zM866 78h1v8h-1zM867 79h1v5h-1zM868 79h2v7h-2zM870 79h4v5h-4zM874 80h1v4h-1zM875 80h2v6h-2zM877 80h1v4h-1zM878 80h1v9h-1zM879 80h1v6h-1zM880 79h1v7h-1zM881 79h1v5h-1zM882 80h1v4h-1zM883 80h1v6h-1zM884 80h2v7h-2zM886 80h2v5h-2zM888 80h3v7h-3zM891 80h1v5h-1zM892 78h1v9h-1zM893 80h5v7h-5zM898 80h1v5h-1zM899 80h2v8h-2zM901 80h7v7h-7zM908 79h1v8h-1zM909 80h1v5h-1zM910 80h3v7h-3zM913 80h3v8h-3zM916 80h4v7h-4zM920 80h3v5h-3zM923 80h4v7h-4zM927 80h3v5h-3zM930 80h1v8h-1zM931 80h4v7h-4zM935 80h2v5h-2zM937 80h1v7h-1zM938 80h1v8h-1zM939 79h1v9h-1zM940 80h2v7h-2zM942 80h2v5h-2zM944 80h3v7h-3zM947 79h1v8h-1zM948 80h2v7h-2zM950 79h1v11h-1zM951 80h2v7h-2zM953 79h1v8h-1zM954 80h3v7h-3zM957 80h2v8h-2zM959 80h1v7h-1zM960 80h2v5h-2zM962 80h1v10h-1zM963 80h1v7h-1zM964 80h1v8h-1zM965 80h8v7h-8zM973 80h3v5h-3zM976 80h1v7h-1zM977 80h3v5h-3zM980 80h2v10h-2zM982 80h3v7h-3zM985 79h1v8h-1zM986 80h1v7h-1zM987 80h1v5h-1zM988 80h3v7h-3zM991 80h8v5h-8zM999 80h3v7h-3zM1002 80h2v10h-2zM1004 80h3v7h-3zM1007 80h3v10h-3zM1010 80h4v7h-4zM1014 80h2v5h-2z" fill="#00ff00"/>
<path d="M36 260h1v12h-1zM37 271h1v13h-1zM38 283h1v12h-1zM39 294h1v13h-1zM40 306h1v12h-1zM360 172h1v43h-1zM361 214h1v37h-1zM362 250h1v11h-1zM363 260h1v10h-1zM366 264h1v7h-1zM367 270h1v7h-1zM507 263h1v12h-1zM508 274h1v12h-1zM509 286h1v10h-1zM510 295h1v11h-1zM511 305h1v10h-1zM512 315h1v9h-1zM832 168h1v9h-1zM833 176h1v41h-1zM834 216h1v28h-1zM835 243h1v15h-1zM836 257h1v15h-1zM978 249h1v14h-1zM979 262h1v14h-1zM980 275h1v13h-1zM981 288h1v13h-1zM982 300h1v11h-1z" fill="#e800e8"/>
<path d="M17 259h2v4h-2zM19 259h4v3h-4zM23 257h1v5h-1zM24 259h5v3h-5zM29 257h1v6h-1zM30 259h6v3h-6zM41 315h1v8h-1zM42 312h1v8h-1zM43 310h1v6h-1zM44 309h1v6h-1zM45 309h1v5h-1zM46 308h1v4h-1zM47 306h1v6h-1zM48 305h1v6h-1zM49 304h1v6h-1zM50 304h1v5h-1zM51 303h2v6h-2zM53 302h1v7h-1zM54 302h2v5h-2zM56 301h2v5h-2zM58 300h1v6h-1zM59 300h2v5h-2zM61 299h1v7h-1zM62 299h1v6h-1zM63 298h1v6h-1zM64 296h1v7h-1zM65 298h1v5h-1zM66 297h1v6h-1zM67 297h1v5h-1zM68 296h1v5h-1zM69 296h1v4h-1zM70 295h1v6h-1zM71 294h1v8h-1zM72 295h1v6h-1zM73 294h1v6h-1zM74 294h1v5h-1zM75 292h1v7h-1zM76 294h1v5h-1zM77 292h2v6h-2zM79 291h1v7h-1zM80 291h1v6h-1zM81 291h1v7h-1zM82 291h1v6h-1zM83 289h1v7h-1zM84 291h1v4h-1zM85 290h1v5h-1zM86 289h1v5h-1zM87 289h1v7h-1zM88 288h1v8h-1zM89 288h1v5h-1zM90 286h1v6h-1zM91 287h1v4h-1zM92 286h1v6h-1zM93 285h1v6h-1zM94 286h1v7h-1zM95 285h1v5h-1zM96 285h1v4h-1zM97 284h1v6h-1zM98 283h1v6h-1zM99 284h1v6h-1zM100 283h1v6h-1zM101 283h1v5h-1zM102 282h1v6h-1zM103 281h2v6h-2zM105 281h2v5h-2zM107 280h1v6h-1zM108 280h1v5h-1zM109 279h1v6h-1zM110 279h1v5h-1zM111 278h1v6h-1zM112 279h1v4h-1zM113 279h1v5h-1zM114 277h1v7h-1zM115 277h1v5h-1zM116 276h1v6h-1zM117 276h1v5h-1zM118 275h1v6h-1zM119 275h2v5h-2zM121 274h1v6h-1zM122 273h1v6h-1zM123 271h1v8h-1zM124 273h1v7h-1zM125 272h1v6h-1zM126 272h2v5h-2zM128 271h1v6h-1zM129 271h2v5h-2zM131 271h1v4h-1zM132 269h1v6h-1zM133 269h2v5h-2zM135 268h1v8h-1zM136 268h1v6h-1zM137 267h1v7h-1zM138 267h1v6h-1zM139 266h1v6h-1zM140 265h1v6h-1zM141 266h1v4h-1zM142 264h1v7h-1zM143 264h1v6h-1zM144 265h1v6h-1zM145 265h1v5h-1zM146 262h1v7h-1zM147 263h1v6h-1zM148 263h1v5h-1zM149 262h1v8h-1zM150 263h2v4h-2zM152 261h1v6h-1zM153 261h1v5h-1zM154 260h1v6h-1zM155 260h1v5h-1zM156 261h1v4h-1zM157 259h1v6h-1zM158 259h1v5h-1zM159 258h1v6h-1zM160 258h1v7h-1zM161 258h1v5h-1zM162 257h1v6h-1zM163 257h1v5h-1zM164 256h1v6h-1zM165 256h1v5h-1zM166 256h1v6h-1zM167 255h1v7h-1zM168 255h1v5h-1zM169 254h3v6h-3zM172 253h1v6h-1zM173 252h1v6h-1zM174 251h1v7h-1zM175 252h2v5h-2zM177 251h1v6h-1zM178 251h1v5h-1zM179 250h1v6h-1zM180 250h1v5h-1zM181 251h1v4h-1zM182 250h2v4h-2zM184 248h3v6h-3zM187 246h1v9h-1zM188 246h2v6h-2zM190 246h2v5h-2zM192 245h1v6h-1zM193 243h1v7h-1zM194 244h1v6h-1zM195 244h1v4h-1zM196 244h1v5h-1zM197 243h1v6h-1zM198 242h1v7h-1zM199 241h1v8h-1zM200 243h1v4h-1zM201 242h1v6h-1zM202 241h1v7h-1zM203 240h1v6h-1zM204 239h1v7h-1zM205 240h1v5h-1zM206 239h1v6h-1zM207 238h1v7h-1zM208 238h1v6h-1zM209 237h1v7h-1zM210 237h4v6h-4zM214 236h1v7h-1zM215 236h2v5h-2zM217 233h1v8h-1zM218 235h1v6h-1zM219 234h1v5h-1zM220 233h2v6h-2zM222 234h2v4h-2zM224 232h1v6h-1zM225 232h1v5h-1zM226 231h1v6h-1zM227 230h1v6h-1zM228 231h1v5h-1zM229 228h1v8h-1zM230 230h1v7h-1zM231 231h1v4h-1zM232 230h1v4h-1zM233 229h1v5h-1zM234 228h2v6h-2zM236 225h1v9h-1zM237 227h2v5h-2zM239 226h1v6h-1zM240 226h1v5h-1zM241 226h1v6h-1zM242 226h1v5h-1zM243 225h1v5h-1zM244 224h1v6h-1zM245 224h1v5h-1zM246 223h1v8h-1zM247 223h1v5h-1zM248 222h1v7h-1zM249 222h1v6h-1zM250 222h1v5h-1zM251 221h1v6h-1zM252 221h1v5h-1zM253 220h1v6h-1zM254 219h1v6h-1zM255 220h1v5h-1zM256 217h1v7h-1zM257 219h1v5h-1zM258 218h1v6h-1zM259 218h1v5h-1zM260 218h1v4h-1zM261 217h1v6h-1zM262 217h1v4h-1zM263 216h3v5h-3zM266 215h1v6h-1zM267 215h1v5h-1zM268 214h1v6h-1zM269 212h1v7h-1zM270 214h1v5h-1zM271 213h1v6h-1zM272 213h2v5h-2zM274 213h1v6h-1zM275 212h1v6h-1zM276 210h1v7h-1zM277 209h1v7h-1zM278 210h1v6h-1zM279 210h1v5h-1zM280 209h1v6h-1zM281 210h1v4h-1zM282 209h1v5h-1zM283 207h1v8h-1zM284 206h1v7h-1zM285 207h1v5h-1zM286 206h1v6h-1zM287 206h1v5h-1zM288 205h1v6h-1zM289 204h1v6h-1zM290 205h1v6h-1zM291 205h1v5h-1zM292 202h1v7h-1zM293 202h1v5h-1zM294 201h1v6h-1zM295 202h1v5h-1zM296 201h1v6h-1zM297 201h1v5h-1zM298 200h2v6h-2zM300 199h1v6h-1zM301 198h2v7h-2zM303 198h1v5h-1zM304 197h1v6h-1zM305 197h1v5h-1zM306 196h1v6h-1zM307 196h1v7h-1zM308 195h1v6h-1zM309 195h1v5h-1zM310 194h1v6h-1zM311 194h1v5h-1zM312 193h1v6h-1zM313 193h1v5h-1zM314 192h1v6h-1zM315 192h1v7h-1zM316 191h1v6h-1zM317 191h1v5h-1zM318 190h2v6h-2zM320 189h1v6h-1zM321 189h1v5h-1zM322 188h1v6h-1zM323 188h1v5h-1zM324 187h1v6h-1zM325 187h1v5h-1zM326 186h1v6h-1zM327 186h1v5h-1zM328 185h1v6h-1zM329 184h1v6h-1zM330 183h1v7h-1zM331 184h1v5h-1zM332 183h1v6h-1zM333 183h1v7h-1zM334 181h1v7h-1zM335 181h2v6h-2zM337 181h1v7h-1zM338 180h1v6h-1zM339 180h1v5h-1zM340 178h1v7h-1zM341 178h2v6h-2zM343 178h1v5h-1zM344 177h1v6h-1zM345 177h2v5h-2zM347 177h1v4h-1zM348 175h1v6h-1zM349 174h1v6h-1zM350 175h1v5h-1zM351 175h1v4h-1zM352 174h1v5h-1zM353 173h1v6h-1zM354 172h1v7h-1zM355 171h1v6h-1zM356 170h1v7h-1zM357 171h1v5h-1zM358 170h1v6h-1zM359 170h1v5h-1zM364 264h1v8h-1zM365 262h1v8h-1zM368 274h1v7h-1zM369 273h2v7h-2zM371 274h1v6h-1zM372 274h3v7h-3zM375 272h1v9h-1zM376 272h1v8h-1zM377 274h3v5h-3zM380 272h1v7h-1zM381 274h1v5h-1zM382 274h2v6h-2zM384 274h4v5h-4zM388 272h1v9h-1zM389 272h1v6h-1zM390 273h1v5h-1zM391 273h1v7h-1zM392 273h2v4h-2zM394 273h3v5h-3zM397 272h1v6h-1zM398 272h3v5h-3zM401 272h1v6h-1zM402 271h3v6h-3zM405 271h2v5h-2zM407 270h1v6h-1zM408 271h1v5h-1zM409 272h2v4h-2zM411 271h1v5h-1zM412 271h2v7h-2zM414 271h2v5h-2zM416 272h1v4h-1zM417 271h1v6h-1zM418 270h1v6h-1zM419 269h1v5h-1zM420 269h1v6h-1zM421 270h1v6h-1zM422 268h1v9h-1zM423 268h1v8h-1zM424 270h3v5h-3zM427 269h1v6h-1zM428 269h1v4h-1zM429 268h1v6h-1zM430 269h1v5h-1zM431 268h1v7h-1zM432 268h1v8h-1zM433 269h1v5h-1zM434 268h1v6h-1zM435 267h1v7h-1zM436 269h1v5h-1zM437 267h1v7h-1zM438 268h1v5h-1zM439 267h2v7h-2zM441 269h1v4h-1zM442 268h1v5h-1zM443 267h1v6h-1zM444 268h3v5h-3zM447 267h1v6h-1zM448 267h2v5h-2zM450 267h1v7h-1zM451 267h4v5h-4zM455 266h4v6h-4zM459 266h5v5h-5zM464 266h2v6h-2zM466 266h4v5h-4zM470 265h1v6h-1zM471 265h1v5h-1zM472 265h1v7h-1zM473 265h2v5h-2zM475 265h2v4h-2zM477 263h1v6h-1zM478 263h2v5h-2zM480 262h1v6h-1zM481 262h2v5h-2zM483 261h1v6h-1zM484 260h1v6h-1zM485 259h1v6h-1zM486 259h1v7h-1zM487 260h2v5h-2zM489 260h1v6h-1zM490 259h1v7h-1zM491 259h1v6h-1zM492 260h3v5h-3zM495 260h1v6h-1zM496 260h2v5h-2zM498 259h1v6h-1zM499 259h1v7h-1zM500 260h1v6h-1zM501 260h2v5h-2zM503 260h1v7h-1zM504 260h1v5h-1zM505 260h1v6h-1zM506 260h1v7h-1zM513 317h1v10h-1zM514 313h1v9h-1zM515 311h1v7h-1zM516 309h1v7h-1zM517 309h2v6h-2zM519 310h1v4h-1zM520 308h1v6h-1zM521 307h1v6h-1zM522 307h1v5h-1zM523 305h1v7h-1zM524 305h1v6h-1zM525 305h1v7h-1zM526 305h1v5h-1zM527 303h1v8h-1zM528 303h1v6h-1zM529 302h1v7h-1zM530 303h1v6h-1zM531 302h1v7h-1zM532 300h1v7h-1zM533 301h1v8h-1zM534 302h1v3h-1zM535 301h1v4h-1zM536 299h1v7h-1zM537 299h4v6h-4zM541 298h1v6h-1zM542 298h1v5h-1zM543 296h1v7h-1zM544 297h1v6h-1zM545 297h3v5h-3zM548 295h2v6h-2zM550 295h2v5h-2zM552 294h1v6h-1zM553 294h2v5h-2zM555 292h1v7h-1zM556 292h1v8h-1zM557 292h1v7h-1zM558 293h1v5h-1zM559 292h1v5h-1zM560 291h1v6h-1zM561 291h1v5h-1zM562 288h1v8h-1zM563 290h1v4h-1zM564 290h1v5h-1zM565 289h1v6h-1zM566 289h1v5h-1zM567 286h1v8h-1zM568 286h1v7h-1zM569 287h1v6h-1zM570 287h1v5h-1zM571 287h1v7h-1zM572 286h1v6h-1zM573 284h1v7h-1zM574 284h1v9h-1zM575 284h1v6h-1zM576 285h1v6h-1zM577 282h1v9h-1zM578 284h1v5h-1zM579 282h1v9h-1zM580 282h1v6h-1zM581 283h1v5h-1zM582 282h1v6h-1zM583 282h1v5h-1zM584 281h1v7h-1zM585 281h1v6h-1zM586 280h1v6h-1zM587 280h2v4h-2zM589 279h1v6h-1zM590 279h1v5h-1zM591 277h1v7h-1zM592 278h1v5h-1zM593 278h1v6h-1zM594 277h1v7h-1zM595 277h1v5h-1zM596 276h1v7h-1zM597 276h1v6h-1zM598 276h1v5h-1zM599 275h1v7h-1zM600 275h1v5h-1zM601 273h1v7h-1zM602 274h1v5h-1zM603 274h1v6h-1zM604 273h1v6h-1zM605 272h2v6h-2zM607 270h1v8h-1zM608 271h1v6h-1zM609 270h1v7h-1zM610 271h1v5h-1zM611 270h1v7h-1zM612 270h1v6h-1zM613 271h1v4h-1zM614 270h1v5h-1zM615 269h1v5h-1zM616 268h1v6h-1zM617 267h1v6h-1zM618 268h1v5h-1zM619 267h1v6h-1zM620 267h1v5h-1zM621 264h1v8h-1zM622 266h1v5h-1zM623 265h1v7h-1zM624 265h1v6h-1zM625 265h1v5h-1zM626 264h2v7h-2zM628 263h2v6h-2zM630 263h1v5h-1zM631 262h1v6h-1zM632 261h1v8h-1zM633 260h1v9h-1zM634 262h1v4h-1zM635 261h1v6h-1zM636 260h2v6h-2zM638 260h1v5h-1zM639 259h1v6h-1zM640 260h1v4h-1zM641 259h1v6h-1zM642 258h1v7h-1zM643 258h1v5h-1zM644 257h1v6h-1zM645 257h1v5h-1zM646 257h1v6h-1zM647 256h1v7h-1zM648 256h1v5h-1zM649 255h1v6h-1zM650 255h1v5h-1zM651 254h1v6h-1zM652 254h1v5h-1zM653 253h1v6h-1zM654 252h1v7h-1zM655 253h1v5h-1zM656 252h1v6h-1zM657 252h1v5h-1zM658 252h1v6h-1zM659 251h1v7h-1zM660 251h1v5h-1zM661 250h1v6h-1zM662 249h1v6h-1zM663 248h1v7h-1zM664 249h2v5h-2zM666 248h1v6h-1zM667 248h1v5h-1zM668 247h1v8h-1zM669 246h1v6h-1zM670 245h1v7h-1zM671 246h1v6h-1zM672 247h1v5h-1zM673 246h1v5h-1zM674 245h1v5h-1zM675 244h1v6h-1zM676 244h2v5h-2zM678 241h1v8h-1zM679 243h1v5h-1zM680 242h1v6h-1zM681 242h1v5h-1zM682 241h1v6h-1zM683 242h1v4h-1zM684 240h1v7h-1zM685 240h1v6h-1zM686 240h1v5h-1zM687 238h1v9h-1zM688 238h1v6h-1zM689 237h1v7h-1zM690 237h1v6h-1zM691 238h1v5h-1zM692 237h1v6h-1zM693 237h1v5h-1zM694 236h1v6h-1zM695 236h1v5h-1zM696 235h2v6h-2zM698 235h1v5h-1zM699 234h1v7h-1zM700 234h1v6h-1zM701 232h1v9h-1zM702 232h1v6h-1zM703 234h1v4h-1zM704 233h1v5h-1zM705 232h1v6h-1zM706 231h1v7h-1zM707 231h1v5h-1zM708 230h1v6h-1zM709 230h1v5h-1zM710 230h1v4h-1zM711 229h2v5h-2zM713 226h1v7h-1zM714 228h2v5h-2zM716 227h2v5h-2zM718 226h1v6h-1zM719 226h1v5h-1zM720 225h1v6h-1zM721 225h1v5h-1zM722 224h1v6h-1zM723 223h1v6h-1zM724 222h1v7h-1zM725 221h1v8h-1zM726 222h1v7h-1zM727 222h1v5h-1zM728 221h1v6h-1zM729 221h1v5h-1zM730 220h1v6h-1zM731 220h2v5h-2zM733 218h1v7h-1zM734 218h2v6h-2zM736 217h4v6h-4zM740 216h1v5h-1zM741 215h1v6h-1zM742 215h1v5h-1zM743 214h1v6h-1zM744 214h1v5h-1zM745 213h2v5h-2zM747 212h1v6h-1zM748 210h1v7h-1zM749 211h1v7h-1zM750 211h1v5h-1zM751 210h1v6h-1zM752 210h1v5h-1zM753 209h1v6h-1zM754 209h1v7h-1zM755 208h1v6h-1zM756 207h1v6h-1zM757 207h1v5h-1zM758 206h1v8h-1zM759 206h1v5h-1zM760 204h1v7h-1zM761 204h2v6h-2zM763 204h1v5h-1zM764 202h1v7h-1zM765 202h1v6h-1zM766 201h1v7h-1zM767 202h1v5h-1zM768 201h1v6h-1zM769 201h1v5h-1zM770 199h1v8h-1zM771 199h2v6h-2zM773 199h1v5h-1zM774 198h1v6h-1zM775 198h1v5h-1zM776 197h1v6h-1zM777 197h1v4h-1zM778 196h1v5h-1zM779 195h1v6h-1zM780 194h1v7h-1zM781 194h1v6h-1zM782 194h1v5h-1zM783 193h1v6h-1zM784 193h1v5h-1zM785 192h1v6h-1zM786 191h1v6h-1zM787 190h1v7h-1zM788 190h1v6h-1zM789 190h1v4h-1zM790 188h1v7h-1zM791 190h1v4h-1zM792 189h1v5h-1zM793 189h1v4h-1zM794 188h1v5h-1zM795 186h1v6h-1zM796 186h1v7h-1zM797 185h1v6h-1zM798 185h1v5h-1zM799 184h1v6h-1zM800 184h1v5h-1zM801 183h1v6h-1zM802 182h1v6h-1zM803 182h1v7h-1zM804 181h1v7h-1zM805 181h1v5h-1zM806 180h2v6h-2zM808 179h1v7h-1zM809 179h1v5h-1zM810 176h1v8h-1zM811 177h1v6h-1zM812 177h1v5h-1zM813 176h1v5h-1zM814 176h1v4h-1zM815 175h1v6h-1zM816 175h1v5h-1zM817 174h1v6h-1zM818 171h1v9h-1zM819 172h2v7h-2zM821 172h1v5h-1zM822 171h1v6h-1zM823 171h1v5h-1zM824 169h1v7h-1zM825 170h1v6h-1zM826 169h1v6h-1zM827 169h1v5h-1zM828 168h1v6h-1zM829 168h1v5h-1zM830 167h1v6h-1zM831 167h1v5h-1zM837 267h1v7h-1zM838 264h1v9h-1zM839 264h1v10h-1zM840 267h1v11h-1zM841 273h1v6h-1zM842 273h1v5h-1zM843 271h1v7h-1zM844 272h1v6h-1zM845 271h1v5h-1zM846 270h1v6h-1zM847 269h1v6h-1zM848 269h1v8h-1zM849 269h1v6h-1zM850 269h1v5h-1zM851 268h1v6h-1zM852 269h1v6h-1zM853 269h1v5h-1zM854 268h1v6h-1zM855 267h1v6h-1zM856 267h2v5h-2zM858 265h1v7h-1zM859 266h3v5h-3zM862 265h1v5h-1zM863 263h1v7h-1zM864 265h1v5h-1zM865 263h1v7h-1zM866 263h1v8h-1zM867 264h1v5h-1zM868 263h2v6h-2zM870 264h1v5h-1zM871 263h1v5h-1zM872 264h1v5h-1zM873 263h2v5h-2zM875 262h2v6h-2zM877 262h1v5h-1zM878 261h1v6h-1zM879 262h1v6h-1zM880 262h1v5h-1zM881 261h2v4h-2zM883 261h2v5h-2zM885 261h2v6h-2zM887 261h1v4h-1zM888 260h3v5h-3zM891 258h1v7h-1zM892 259h1v5h-1zM893 258h1v6h-1zM894 259h1v5h-1zM895 258h1v6h-1zM896 257h1v7h-1zM897 257h1v6h-1zM898 259h1v4h-1zM899 258h3v5h-3zM902 256h1v7h-1zM903 257h2v5h-2zM905 256h1v6h-1zM906 257h2v4h-2zM908 257h1v5h-1zM909 255h1v7h-1zM910 256h1v6h-1zM911 256h1v7h-1zM912 256h1v5h-1zM913 256h2v6h-2zM915 254h1v7h-1zM916 256h4v5h-4zM920 256h1v4h-1zM921 256h1v5h-1zM922 256h1v4h-1zM923 255h3v5h-3zM926 255h1v6h-1zM927 254h1v8h-1zM928 255h1v4h-1zM929 255h1v5h-1zM930 254h2v6h-2zM932 255h2v6h-2zM934 256h1v5h-1zM935 256h2v4h-2zM937 256h1v5h-1zM938 256h1v6h-1zM939 256h2v4h-2zM941 255h1v6h-1zM942 256h1v5h-1zM943 255h2v6h-2zM945 254h1v6h-1zM946 254h1v7h-1zM947 253h1v7h-1zM948 251h1v8h-1zM949 251h3v6h-3zM952 250h1v6h-1zM953 249h1v7h-1zM954 250h1v6h-1zM955 249h1v6h-1zM956 249h2v5h-2zM958 248h2v6h-2zM960 249h2v5h-2zM962 248h1v6h-1zM963 248h1v5h-1zM964 246h1v7h-1zM965 247h1v6h-1zM966 246h1v7h-1zM967 246h1v6h-1zM968 246h1v5h-1zM969 247h2v5h-2zM971 247h1v6h-1zM972 247h1v5h-1zM973 245h1v9h-1zM974 247h2v5h-2zM976 248h1v5h-1zM977 247h1v6h-1zM983 302h1v11h-1zM984 299h1v9h-1zM985 296h1v8h-1zM986 294h1v5h-1zM987 293h1v6h-1zM988 291h1v7h-1zM989 290h1v7h-1zM990 291h1v5h-1zM991 290h1v6h-1zM992 290h1v5h-1zM993 289h1v5h-1zM994 289h1v4h-1zM995 289h1v5h-1zM996 287h1v7h-1zM997 288h1v6h-1zM998 287h1v7h-1zM999 287h1v5h-1zM1000 285h1v7h-1zM1001 286h2v6h-2zM1003 286h2v5h-2zM1005 285h1v8h-1zM1006 285h2v6h-2zM1008 284h1v7h-1zM1009 284h1v6h-1zM1010 284h1v7h-1zM1011 284h1v5h-1zM1012 282h2v7h-2zM1014 283h1v6h-1zM1015 282h1v6h-1z" fill="#ff00ff"/>
<path d="M39 384h1v57h-1zM361 93h1v339h-1zM362 101h1v261h-1zM364 295h1v67h-1zM365 215h1v80h-1zM366 214h1v37h-1zM367 251h1v55h-1zM368 290h1v17h-1zM369 260h1v30h-1zM370 258h1v10h-1zM371 267h1v22h-1zM373 270h1v16h-1zM375 271h1v10h-1zM455 292h1v14h-1zM456 305h1v15h-1zM457 319h1v16h-1zM458 334h1v18h-1zM459 352h1v17h-1zM460 369h1v18h-1zM461 386h1v17h-1zM462 403h1v15h-1zM463 418h1v13h-1zM510 384h1v57h-1zM835 93h1v339h-1zM836 212h1v150h-1zM837 339h1v23h-1zM838 233h1v106h-1zM839 214h1v19h-1zM840 231h1v67h-1zM841 296h1v11h-1zM842 262h1v35h-1zM844 266h1v23h-1zM846 269h1v16h-1zM848 273h1v10h-1zM928 291h1v14h-1zM929 304h1v14h-1zM930 318h1v15h-1zM931 333h1v17h-1zM932 350h1v18h-1zM933 367h1v18h-1zM934 384h1v18h-1zM935 401h1v16h-1zM936 416h1v15h-1zM980 375h1v66h-1z" fill="#d8d800"/>
<path d="M17 404h1v8h-1zM18 399h1v7h-1zM19 394h1v7h-1zM20 389h1v8h-1zM21 384h1v8h-1zM22 380h1v7h-1zM23 377h1v6h-1zM24 374h1v6h-1zM25 371h1v6h-1zM26 368h1v6h-1zM27 367h1v5h-1zM28 366h1v4h-1zM29 362h1v7h-1zM30 364h1v3h-1zM31 364h1v5h-1zM32 366h1v4h-1zM33 367h1v5h-1zM34 369h1v6h-1zM35 372h1v4h-1zM36 374h1v6h-1zM37 377h1v6h-1zM38 380h1v6h-1zM40 433h1v10h-1zM41 429h1v10h-1zM42 429h9v6h-9zM51 429h2v5h-2zM53 429h7v6h-7zM60 428h2v7h-2zM62 430h1v5h-1zM63 430h1v6h-1zM64 429h2v6h-2zM66 428h1v7h-1zM67 429h4v6h-4zM71 427h1v8h-1zM72 429h1v8h-1zM73 429h4v6h-4zM77 429h1v7h-1zM78 429h1v6h-1zM79 429h2v7h-2zM81 429h1v5h-1zM82 429h2v6h-2zM84 429h2v5h-2zM86 429h1v6h-1zM87 429h2v5h-2zM89 429h2v6h-2zM91 428h1v7h-1zM92 429h9v6h-9zM101 429h1v7h-1zM102 430h1v6h-1zM103 429h2v6h-2zM105 429h2v7h-2zM107 429h3v6h-3zM110 430h1v5h-1zM111 429h1v8h-1zM112 429h4v6h-4zM116 429h1v7h-1zM117 430h1v6h-1zM118 430h1v5h-1zM119 429h1v6h-1zM120 429h2v8h-2zM122 429h2v5h-2zM124 429h1v6h-1zM125 428h1v7h-1zM126 429h6v6h-6zM132 429h2v5h-2zM134 429h4v6h-4zM138 429h2v5h-2zM140 428h2v7h-2zM142 429h3v6h-3zM145 429h1v7h-1zM146 429h1v6h-1zM147 428h2v7h-2zM149 429h4v6h-4zM153 429h1v5h-1zM154 428h2v7h-2zM156 429h2v6h-2zM158 427h1v8h-1zM159 429h9v6h-9zM168 428h2v7h-2zM170 429h2v6h-2zM172 429h1v8h-1zM173 429h1v7h-1zM174 429h1v8h-1zM175 429h2v7h-2zM177 429h7v6h-7zM184 429h1v8h-1zM185 429h5v6h-5zM190 428h1v8h-1zM191 428h1v7h-1zM192 430h2v5h-2zM194 429h16v6h-16zM210 428h1v7h-1zM211 429h6v6h-6zM217 430h1v5h-1zM218 429h5v6h-5zM223 429h2v5h-2zM225 429h2v6h-2zM227 427h1v8h-1zM228 430h1v5h-1zM229 429h16v6h-16zM245 429h1v8h-1zM246 429h4v6h-4zM250 428h2v7h-2zM252 429h9v6h-9zM261 429h1v5h-1zM262 429h2v6h-2zM264 429h2v7h-2zM266 429h8v6h-8zM274 428h1v7h-1zM275 429h2v6h-2zM277 429h1v5h-1zM278 429h1v6h-1zM279 429h1v5h-1zM280 429h2v6h-2zM282 429h1v5h-1zM283 429h1v6h-1zM284 428h3v7h-3zM287 429h10v6h-10zM297 427h1v8h-1zM298 429h1v6h-1zM299 428h2v7h-2zM301 429h5v6h-5zM306 428h1v7h-1zM307 429h8v6h-8zM315 428h2v7h-2zM317 429h3v6h-3zM320 429h1v5h-1zM321 429h3v6h-3zM324 429h1v5h-1zM325 430h2v5h-2zM327 429h1v6h-1zM328 429h2v5h-2zM330 430h2v5h-2zM332 427h1v8h-1zM333 429h6v6h-6zM339 429h1v5h-1zM340 429h6v6h-6zM346 428h1v7h-1zM347 429h2v7h-2zM349 429h2v5h-2zM351 429h9v6h-9zM360 431h1v2h-1zM363 361h1v2h-1zM372 285h1v6h-1zM374 267h1v4h-1zM376 281h1v3h-1zM377 275h1v7h-1zM378 271h1v7h-1zM379 272h1v8h-1zM380 275h1v6h-1zM381 274h1v7h-1zM382 274h4v6h-4zM386 275h1v5h-1zM387 275h4v6h-4zM391 276h1v6h-1zM392 276h1v5h-1zM393 276h6v6h-6zM399 277h1v5h-1zM400 277h2v6h-2zM402 277h1v8h-1zM403 277h2v6h-2zM405 279h1v4h-1zM406 278h1v7h-1zM407 278h2v5h-2zM409 278h2v7h-2zM411 278h3v6h-3zM414 279h4v5h-4zM418 279h2v7h-2zM420 279h7v6h-7zM427 280h5v5h-5zM432 280h1v6h-1zM433 280h1v7h-1zM434 280h1v6h-1zM435 280h2v7h-2zM437 281h2v5h-2zM439 280h1v7h-1zM440 280h2v6h-2zM442 280h1v8h-1zM443 280h1v6h-1zM444 281h1v7h-1zM445 282h2v4h-2zM447 281h3v5h-3zM450 280h1v6h-1zM451 281h2v6h-2zM453 281h1v11h-1zM454 286h1v9h-1zM464 428h1v10h-1zM465 432h1v5h-1zM466 433h1v5h-1zM467 433h1v4h-1zM468 433h2v3h-2zM470 432h4v5h-4zM474 432h1v7h-1zM475 432h1v5h-1zM476 433h1v4h-1zM477 433h1v3h-1zM478 432h1v4h-1zM479 432h2v7h-2zM481 431h1v6h-1zM482 430h1v6h-1zM483 429h1v6h-1zM484 424h1v8h-1zM485 418h1v9h-1zM486 414h1v8h-1zM487 409h1v8h-1zM488 403h1v9h-1zM489 397h1v9h-1zM490 393h1v8h-1zM491 389h1v7h-1zM492 384h1v7h-1zM493 381h1v5h-1zM494 376h1v7h-1zM495 375h1v5h-1zM496 372h1v5h-1zM497 368h1v6h-1zM498 367h1v5h-1zM499 366h1v4h-1zM500 364h1v5h-1zM501 364h1v3h-1zM502 364h1v5h-1zM503 366h1v4h-1zM504 367h1v5h-1zM505 369h1v6h-1zM506 372h1v5h-1zM507 374h1v6h-1zM508 377h1v6h-1zM509 380h1v6h-1zM511 433h1v10h-1zM512 429h1v10h-1zM513 429h11v6h-11zM524 429h1v8h-1zM525 429h6v6h-6zM531 430h1v5h-1zM532 429h10v6h-10zM542 429h2v5h-2zM544 429h1v6h-1zM545 429h2v7h-2zM547 429h2v6h-2zM549 429h1v7h-1zM550 429h2v6h-2zM552 430h1v5h-1zM553 429h1v6h-1zM554 429h2v7h-2zM556 429h2v5h-2zM558 429h2v6h-2zM560 429h2v5h-2zM562 429h2v6h-2zM564 428h2v7h-2zM566 429h1v6h-1zM567 427h1v8h-1zM568 429h7v6h-7zM575 429h1v8h-1zM576 429h2v7h-2zM578 429h8v6h-8zM586 430h2v5h-2zM588 429h3v6h-3zM591 428h1v7h-1zM592 428h1v8h-1zM593 429h4v6h-4zM597 429h1v7h-1zM598 429h1v6h-1zM599 429h2v7h-2zM601 429h1v8h-1zM602 429h14v6h-14zM616 429h1v5h-1zM617 429h2v6h-2zM619 429h1v8h-1zM620 428h1v7h-1zM621 429h3v6h-3zM624 429h3v7h-3zM627 427h1v8h-1zM628 429h1v6h-1zM629 430h1v5h-1zM630 429h3v6h-3zM633 429h2v5h-2zM635 429h10v6h-10zM645 428h2v7h-2zM647 429h16v6h-16zM663 430h2v5h-2zM665 429h1v6h-1zM666 429h2v5h-2zM668 429h2v6h-2zM670 429h1v5h-1zM671 429h2v6h-2zM673 429h1v5h-1zM674 429h1v6h-1zM675 429h2v5h-2zM677 429h4v6h-4zM681 427h1v8h-1zM682 429h1v6h-1zM683 429h1v5h-1zM684 429h3v6h-3zM687 428h2v7h-2zM689 429h4v6h-4zM693 428h3v7h-3zM696 429h1v6h-1zM697 430h2v5h-2zM699 429h3v6h-3zM702 429h1v7h-1zM703 429h2v6h-2zM705 429h1v8h-1zM706 429h1v6h-1zM707 428h2v7h-2zM709 429h5v6h-5zM714 428h2v7h-2zM716 429h1v8h-1zM717 429h4v6h-4zM721 427h1v9h-1zM722 429h1v7h-1zM723 429h4v6h-4zM727 430h1v5h-1zM728 429h10v6h-10zM738 429h1v7h-1zM739 428h2v7h-2zM741 429h1v6h-1zM742 429h1v5h-1zM743 429h3v6h-3zM746 430h1v5h-1zM747 429h1v5h-1zM748 429h1v6h-1zM749 430h2v5h-2zM751 429h1v6h-1zM752 429h1v7h-1zM753 429h1v6h-1zM754 429h1v7h-1zM755 430h1v5h-1zM756 429h3v6h-3zM759 428h2v7h-2zM761 429h1v6h-1zM762 430h2v5h-2zM764 429h8v6h-8zM772 429h1v5h-1zM773 430h1v5h-1zM774 429h14v6h-14zM788 428h1v7h-1zM789 429h9v6h-9zM798 429h1v5h-1zM799 429h3v6h-3zM802 430h1v5h-1zM803 428h2v7h-2zM805 429h1v6h-1zM806 429h1v5h-1zM807 429h3v6h-3zM810 430h2v5h-2zM812 429h1v6h-1zM813 429h1v5h-1zM814 429h5v6h-5zM819 430h2v5h-2zM821 429h2v6h-2zM823 429h2v5h-2zM825 429h8v6h-8zM833 431h2v2h-2zM843 258h1v9h-1zM845 284h1v9h-1zM847 267h1v7h-1zM849 280h1v5h-1zM850 275h1v6h-1zM851 271h1v9h-1zM852 273h1v7h-1zM853 275h1v6h-1zM854 274h1v7h-1zM855 274h4v6h-4zM859 275h1v5h-1zM860 274h1v7h-1zM861 275h2v6h-2zM863 275h1v5h-1zM864 276h1v4h-1zM865 275h1v6h-1zM866 275h1v7h-1zM867 276h1v6h-1zM868 276h4v5h-4zM872 277h1v4h-1zM873 277h1v5h-1zM874 276h2v7h-2zM876 277h2v6h-2zM878 278h1v5h-1zM879 278h5v6h-5zM884 277h2v7h-2zM886 278h1v6h-1zM887 279h1v5h-1zM888 279h2v6h-2zM890 278h1v6h-1zM891 278h1v7h-1zM892 279h7v6h-7zM899 279h1v5h-1zM900 280h1v4h-1zM901 280h3v5h-3zM904 280h1v6h-1zM905 280h1v7h-1zM906 278h1v8h-1zM907 280h2v6h-2zM909 278h1v10h-1zM910 280h7v6h-7zM917 280h1v5h-1zM918 280h1v6h-1zM919 281h5v5h-5zM924 281h2v6h-2zM926 281h1v9h-1zM927 285h1v9h-1zM937 427h1v11h-1zM938 432h2v5h-2zM940 433h2v4h-2zM942 432h1v5h-1zM943 432h2v4h-2zM945 432h1v7h-1zM946 433h1v3h-1zM947 433h1v4h-1zM948 430h1v7h-1zM949 432h5v5h-5zM954 430h1v7h-1zM955 430h1v6h-1zM956 429h1v5h-1zM957 425h1v7h-1zM958 420h1v8h-1zM959 415h1v8h-1zM960 409h1v9h-1zM961 404h1v8h-1zM962 399h1v7h-1zM963 394h1v8h-1zM964 388h1v9h-1zM965 384h1v8h-1zM966 380h1v8h-1zM967 377h1v6h-1zM968 375h1v5h-1zM969 373h1v4h-1zM970 369h1v6h-1zM971 367h1v5h-1zM972 366h1v4h-1zM973 364h1v5h-1zM974 364h1v3h-1zM975 364h1v4h-1zM976 365h1v5h-1zM977 367h1v6h-1zM978 369h1v7h-1zM979 372h1v5h-1zM981 433h1v10h-1zM982 429h1v10h-1zM983 429h1v6h-1zM984 430h1v5h-1zM985 429h4v6h-4zM989 429h2v5h-2zM991 429h6v6h-6zM997 428h2v7h-2zM999 427h1v9h-1zM1000 429h1v7h-1zM1001 429h3v6h-3zM1004 428h1v7h-1zM1005 429h1v5h-1zM1006 429h1v6h-1zM1007 429h1v8h-1zM1008 429h1v6h-1zM1009 428h2v7h-2zM1011 429h5v6h-5z" fill="#ffff00"/>
<path d="M40 136h1v209h-1zM360 146h1v218h-1zM362 349h1v13h-1zM511 136h1v209h-1zM833 146h1v218h-1zM835 350h1v12h-1zM981 136h1v209h-1z" fill="#00b8c4"/>
<path d="M20 342h1v5h-1zM21 343h1v4h-1zM22 343h1v6h-1zM23 343h1v4h-1zM24 342h3v5h-3zM27 343h1v4h-1zM28 341h7v6h-7zM35 343h1v4h-1zM36 343h1v5h-1zM37 343h2v4h-2zM39 341h1v6h-1zM41 134h1v10h-1zM42 140h1v5h-1zM43 139h1v6h-1zM44 141h1v5h-1zM45 140h3v6h-3zM48 142h1v5h-1zM49 141h3v6h-3zM52 143h1v4h-1zM53 141h2v6h-2zM55 142h1v5h-1zM56 141h4v6h-4zM60 143h1v5h-1zM61 144h2v4h-2zM63 142h2v6h-2zM65 142h1v7h-1zM66 142h1v6h-1zM67 142h1v7h-1zM68 142h1v6h-1zM69 143h2v5h-2zM71 144h1v4h-1zM72 143h2v5h-2zM74 142h2v6h-2zM76 144h1v5h-1zM77 144h1v4h-1zM78 143h2v5h-2zM80 142h2v6h-2zM82 144h1v4h-1zM83 142h4v6h-4zM87 142h1v8h-1zM88 142h4v6h-4zM92 143h1v5h-1zM93 144h1v4h-1zM94 142h2v6h-2zM96 144h2v4h-2zM98 142h1v7h-1zM99 142h8v6h-8zM107 144h2v4h-2zM109 144h1v5h-1zM110 144h1v4h-1zM111 142h7v6h-7zM118 144h1v8h-1zM119 144h1v5h-1zM120 142h4v6h-4zM124 142h1v7h-1zM125 142h6v6h-6zM131 144h4v4h-4zM135 142h3v6h-3zM138 144h1v4h-1zM139 142h1v6h-1zM140 144h2v4h-2zM142 143h1v5h-1zM143 143h1v6h-1zM144 143h1v5h-1zM145 142h3v6h-3zM148 144h3v4h-3zM151 143h2v5h-2zM153 143h1v6h-1zM154 144h1v4h-1zM155 142h4v6h-4zM159 143h2v5h-2zM161 143h1v6h-1zM162 144h2v4h-2zM164 142h1v6h-1zM165 142h1v8h-1zM166 143h2v5h-2zM168 142h9v6h-9zM177 144h4v4h-4zM181 142h1v6h-1zM182 144h1v4h-1zM183 142h3v6h-3zM186 144h1v4h-1zM187 142h1v8h-1zM188 144h4v4h-4zM192 142h6v6h-6zM198 144h1v4h-1zM199 143h3v5h-3zM202 142h2v6h-2zM204 143h1v5h-1zM205 142h4v6h-4zM209 144h1v4h-1zM210 142h3v6h-3zM213 144h1v4h-1zM214 142h1v6h-1zM215 144h3v4h-3zM218 142h2v6h-2zM220 144h3v4h-3zM223 142h1v6h-1zM224 144h6v4h-6zM230 142h6v6h-6zM236 144h1v6h-1zM237 143h1v5h-1zM238 142h1v8h-1zM239 142h2v6h-2zM241 143h2v5h-2zM243 142h1v6h-1zM244 144h1v4h-1zM245 143h3v5h-3zM248 144h2v4h-2zM250 142h1v6h-1zM251 144h1v8h-1zM252 142h3v6h-3zM255 144h1v4h-1zM256 143h1v5h-1zM257 144h1v4h-1zM258 142h2v6h-2zM260 143h3v5h-3zM263 142h1v7h-1zM264 144h1v5h-1zM265 144h1v4h-1zM266 142h3v6h-3zM269 144h1v4h-1zM270 143h2v5h-2zM272 142h4v6h-4zM276 144h1v8h-1zM277 144h4v4h-4zM281 143h3v5h-3zM284 142h5v6h-5zM289 144h1v4h-1zM290 142h5v6h-5zM295 143h1v5h-1zM296 143h1v7h-1zM297 143h1v5h-1zM298 142h3v6h-3zM301 144h1v4h-1zM302 142h1v6h-1zM303 144h1v4h-1zM304 142h3v6h-3zM307 144h1v4h-1zM308 142h4v6h-4zM312 142h1v8h-1zM313 144h6v4h-6zM319 142h3v6h-3zM322 142h1v7h-1zM323 144h1v4h-1zM324 142h3v6h-3zM327 144h2v4h-2zM329 143h3v5h-3zM332 144h2v4h-2zM334 142h4v6h-4zM338 143h5v5h-5zM343 144h1v4h-1zM344 142h1v6h-1zM345 144h2v4h-2zM347 142h6v6h-6zM353 144h2v4h-2zM355 142h2v6h-2zM357 144h2v4h-2zM359 142h1v6h-1zM361 358h1v7h-1zM363 344h1v7h-1zM364 343h1v7h-1zM365 343h1v6h-1zM366 342h1v7h-1zM367 344h1v4h-1zM368 342h1v6h-1zM369 343h1v5h-1zM370 343h1v4h-1zM371 341h1v6h-1zM372 343h1v6h-1zM373 343h1v4h-1zM374 341h3v6h-3zM377 341h1v7h-1zM378 343h1v4h-1zM379 341h6v6h-6zM385 343h2v4h-2zM387 341h1v8h-1zM388 341h2v6h-2zM390 343h1v4h-1zM391 341h1v6h-1zM392 343h1v4h-1zM393 341h3v6h-3zM396 343h2v4h-2zM398 343h1v8h-1zM399 342h1v7h-1zM400 342h2v5h-2zM402 343h1v4h-1zM403 341h7v6h-7zM410 341h1v8h-1zM411 341h3v6h-3zM414 343h1v4h-1zM415 341h1v6h-1zM416 343h1v4h-1zM417 341h3v6h-3zM420 343h1v4h-1zM421 341h4v6h-4zM425 341h1v10h-1zM426 341h2v6h-2zM428 343h2v4h-2zM430 341h6v6h-6zM436 343h1v4h-1zM437 342h2v5h-2zM439 343h1v4h-1zM440 341h1v8h-1zM441 341h3v6h-3zM444 343h1v5h-1zM445 342h1v5h-1zM446 342h1v6h-1zM447 342h1v5h-1zM448 343h3v4h-3zM451 341h1v6h-1zM452 343h1v4h-1zM453 343h1v6h-1zM454 341h6v6h-6zM460 343h1v5h-1zM461 341h1v6h-1zM462 343h1v4h-1zM463 341h4v6h-4zM467 341h1v7h-1zM468 343h1v4h-1zM469 341h4v6h-4zM473 343h2v4h-2zM475 341h2v6h-2zM477 342h3v5h-3zM480 343h2v4h-2zM482 341h6v6h-6zM488 343h2v4h-2zM490 341h8v6h-8zM498 342h1v6h-1zM499 342h1v5h-1zM500 343h3v4h-3zM503 342h2v5h-2zM505 343h1v4h-1zM506 341h1v6h-1zM507 343h2v4h-2zM509 341h2v6h-2zM512 136h1v8h-1zM513 140h1v5h-1zM514 139h1v6h-1zM515 139h1v7h-1zM516 140h3v6h-3zM519 140h1v7h-1zM520 141h9v6h-9zM529 141h1v10h-1zM530 141h1v6h-1zM531 141h1v7h-1zM532 143h1v5h-1zM533 143h1v6h-1zM534 143h1v5h-1zM535 144h2v4h-2zM537 142h1v6h-1zM538 143h1v7h-1zM539 143h1v5h-1zM540 142h1v6h-1zM541 144h2v4h-2zM543 142h4v6h-4zM547 143h1v5h-1zM548 142h3v6h-3zM551 144h1v4h-1zM552 142h1v6h-1zM553 142h1v8h-1zM554 142h1v6h-1zM555 142h1v10h-1zM556 142h1v8h-1zM557 142h1v7h-1zM558 143h3v5h-3zM561 144h3v4h-3zM564 143h3v5h-3zM567 144h3v4h-3zM570 143h2v5h-2zM572 142h3v6h-3zM575 144h5v4h-5zM580 142h4v6h-4zM584 144h1v4h-1zM585 142h2v6h-2zM587 142h1v10h-1zM588 142h9v6h-9zM597 142h1v7h-1zM598 142h2v6h-2zM600 144h1v6h-1zM601 142h12v6h-12zM613 144h3v4h-3zM616 142h4v6h-4zM620 142h1v7h-1zM621 142h1v6h-1zM622 144h1v4h-1zM623 143h3v5h-3zM626 144h4v4h-4zM630 142h1v6h-1zM631 144h1v4h-1zM632 142h1v6h-1zM633 144h1v6h-1zM634 142h1v6h-1zM635 144h1v4h-1zM636 142h5v6h-5zM641 144h1v4h-1zM642 142h1v7h-1zM643 142h1v6h-1zM644 144h3v4h-3zM647 142h1v6h-1zM648 144h1v4h-1zM649 143h1v5h-1zM650 142h3v6h-3zM653 144h1v4h-1zM654 142h3v6h-3zM657 144h1v4h-1zM658 142h2v6h-2zM660 144h1v4h-1zM661 142h3v6h-3zM664 144h1v5h-1zM665 142h3v6h-3zM668 144h1v5h-1zM669 144h1v4h-1zM670 143h1v5h-1zM671 142h1v8h-1zM672 142h3v6h-3zM675 144h1v4h-1zM676 142h1v6h-1zM677 142h1v8h-1zM678 142h4v6h-4zM682 142h2v7h-2zM684 142h4v6h-4zM688 143h3v5h-3zM691 142h2v6h-2zM693 144h1v4h-1zM694 142h1v6h-1zM695 144h1v5h-1zM696 142h3v6h-3zM699 144h1v4h-1zM700 142h1v6h-1zM701 144h2v4h-2zM703 142h3v6h-3zM706 142h1v8h-1zM707 142h1v6h-1zM708 142h1v10h-1zM709 143h2v5h-2zM711 142h1v7h-1zM712 142h1v6h-1zM713 144h1v4h-1zM714 142h1v6h-1zM715 142h1v7h-1zM716 142h2v6h-2zM718 144h6v4h-6zM724 142h3v6h-3zM727 144h1v4h-1zM728 142h2v6h-2zM730 144h2v4h-2zM732 142h1v8h-1zM733 144h1v4h-1zM734 142h3v6h-3zM737 144h1v4h-1zM738 143h2v5h-2zM740 142h2v6h-2zM742 143h1v5h-1zM743 142h4v6h-4zM747 142h1v10h-1zM748 142h1v6h-1zM749 144h2v4h-2zM751 142h2v6h-2zM753 142h1v8h-1zM754 142h2v6h-2zM756 144h1v4h-1zM757 142h1v6h-1zM758 143h1v5h-1zM759 142h2v6h-2zM761 144h4v4h-4zM765 142h4v6h-4zM769 142h1v8h-1zM770 142h2v6h-2zM772 142h1v8h-1zM773 144h1v4h-1zM774 142h3v6h-3zM777 144h1v4h-1zM778 142h3v6h-3zM781 143h1v5h-1zM782 144h1v4h-1zM783 142h1v6h-1zM784 144h2v4h-2zM786 142h2v6h-2zM788 144h1v4h-1zM789 143h1v6h-1zM790 142h2v6h-2zM792 142h1v7h-1zM793 142h3v6h-3zM796 144h2v4h-2zM798 142h1v6h-1zM799 144h2v4h-2zM801 142h1v8h-1zM802 142h1v6h-1zM803 144h1v4h-1zM804 144h1v6h-1zM805 142h1v8h-1zM806 142h2v6h-2zM808 144h2v4h-2zM810 142h5v6h-5zM815 142h1v8h-1zM816 144h3v4h-3zM819 142h3v6h-3zM822 142h1v8h-1zM823 142h1v6h-1zM824 144h1v4h-1zM825 142h1v7h-1zM826 142h1v6h-1zM827 144h1v4h-1zM828 142h5v6h-5zM834 358h1v7h-1zM836 344h1v8h-1zM837 344h1v6h-1zM838 343h1v11h-1zM839 342h1v7h-1zM840 342h1v6h-1zM841 344h1v4h-1zM842 343h1v5h-1zM843 341h1v6h-1zM844 343h1v4h-1zM845 343h1v8h-1zM846 343h2v4h-2zM848 341h2v6h-2zM850 341h1v8h-1zM851 343h1v4h-1zM852 341h2v6h-2zM854 341h1v8h-1zM855 343h2v4h-2zM857 343h1v5h-1zM858 341h2v6h-2zM860 343h1v4h-1zM861 341h2v6h-2zM863 343h2v4h-2zM865 342h1v6h-1zM866 342h1v5h-1zM867 343h1v4h-1zM868 341h1v6h-1zM869 343h2v4h-2zM871 342h1v5h-1zM872 341h3v6h-3zM875 342h2v5h-2zM877 343h1v4h-1zM878 342h2v5h-2zM880 341h6v6h-6zM886 342h1v5h-1zM887 341h1v6h-1zM888 342h1v6h-1zM889 342h1v5h-1zM890 343h1v4h-1zM891 342h1v5h-1zM892 342h1v6h-1zM893 343h1v4h-1zM894 341h1v10h-1zM895 341h2v6h-2zM897 341h1v7h-1zM898 341h1v6h-1zM899 343h2v4h-2zM901 341h1v7h-1zM902 341h2v6h-2zM904 343h1v4h-1zM905 341h1v6h-1zM906 343h3v4h-3zM909 341h2v6h-2zM911 343h1v4h-1zM912 341h1v6h-1zM913 343h1v4h-1zM914 341h2v6h-2zM916 343h1v4h-1zM917 343h1v5h-1zM918 343h1v4h-1zM919 342h2v5h-2zM921 343h1v4h-1zM922 341h4v6h-4zM926 343h2v4h-2zM928 341h1v6h-1zM929 343h1v4h-1zM930 341h3v6h-3zM933 343h1v4h-1zM934 341h2v6h-2zM936 343h2v4h-2zM938 341h2v6h-2zM940 343h1v4h-1zM941 341h1v6h-1zM942 343h1v4h-1zM943 341h7v6h-7zM950 341h1v10h-1zM951 341h3v6h-3zM954 342h2v5h-2zM956 343h1v6h-1zM957 341h2v6h-2zM959 343h1v5h-1zM960 341h1v6h-1zM961 341h1v8h-1zM962 341h1v7h-1zM963 343h2v4h-2zM965 341h10v6h-10zM975 343h1v4h-1zM976 342h1v5h-1zM977 341h3v6h-3zM980 343h1v4h-1zM982 136h1v12h-1zM983 139h1v6h-1zM984 140h1v5h-1zM985 140h1v6h-1zM986 142h1v4h-1zM987 140h1v6h-1zM988 142h2v5h-2zM990 141h2v6h-2zM992 143h2v4h-2zM994 141h1v6h-1zM995 143h2v4h-2zM997 141h3v6h-3zM1000 143h1v4h-1zM1001 143h1v5h-1zM1002 144h1v4h-1zM1003 143h1v7h-1zM1004 143h1v5h-1zM1005 142h2v6h-2zM1007 142h1v7h-1zM1008 142h3v6h-3zM1011 144h3v4h-3zM1014 142h2v6h-2z" fill="#00ffff"/>
</g>
<path d="M36 36h1v6h-1zM36 469h1v6h-1zM56 36h1v6h-1zM56 469h1v6h-1zM76 36h1v6h-1zM76 469h1v6h-1zM96 36h1v6h-1zM96 469h1v6h-1zM116 36h1v10h-1zM116 465h1v10h-1zM136 36h1v6h-1zM136 469h1v6h-1zM156 36h1v6h-1zM156 469h1v6h-1zM176 36h1v6h-1zM176 469h1v6h-1zM196 36h1v6h-1zM196 469h1v6h-1zM216 36h1v10h-1zM216 465h1v10h-1zM236 36h1v6h-1zM236 469h1v6h-1zM256 36h1v6h-1zM256 469h1v6h-1zM276 36h1v6h-1zM276 469h1v6h-1zM296 36h1v6h-1zM296 469h1v6h-1zM316 36h1v10h-1zM316 465h1v10h-1zM336 36h1v6h-1zM336 469h1v6h-1zM356 36h1v6h-1zM356 469h1v6h-1zM376 36h1v6h-1zM376 469h1v6h-1zM396 36h1v6h-1zM396 469h1v6h-1zM416 36h1v10h-1zM416 465h1v10h-1zM436 36h1v6h-1zM436 469h1v6h-1zM456 36h1v6h-1zM456 469h1v6h-1zM476 36h1v6h-1zM476 469h1v6h-1zM496 36h1v6h-1zM496 469h1v6h-1zM516 36h1v10h-1zM516 465h1v10h-1zM536 36h1v6h-1zM536 469h1v6h-1zM556 36h1v6h-1zM556 469h1v6h-1zM576 36h1v6h-1zM576 469h1v6h-1zM596 36h1v6h-1zM596 469h1v6h-1zM616 36h1v10h-1zM616 465h1v10h-1zM636 36h1v6h-1zM636 469h1v6h-1zM656 36h1v6h-1zM656 469h1v6h-1zM676 36h1v6h-1zM676 469h1v6h-1zM696 36h1v6h-1zM696 469h1v6h-1zM716 36h1v10h-1zM716 465h1v10h-1zM736 36h1v6h-1zM736 469h1v6h-1zM756 36h1v6h-1zM756 469h1v6h-1zM776 36h1v6h-1zM776 469h1v6h-1zM796 36h1v6h-1zM796 469h1v6h-1zM816 36h1v10h-1zM816 465h1v10h-1zM836 36h1v6h-1zM836 469h1v6h-1zM856 36h1v6h-1zM856 469h1v6h-1zM876 36h1v6h-1zM876 469h1v6h-1zM896 36h1v6h-1zM896 469h1v6h-1zM916 36h1v10h-1zM916 465h1v10h-1zM936 36h1v6h-1zM936 469h1v6h-1zM956 36h1v6h-1zM956 469h1v6h-1zM976 36h1v6h-1zM976 469h1v6h-1zM996 36h1v6h-1zM996 469h1v6h-1zM17 44.05h6v1h-6zM1010 44.05h6v1h-6zM17 52.85h6v1h-6zM1010 52.85h6v1h-6zM17 61.65h6v1h-6zM1010 61.65h6v1h-6zM17 70.45h6v1h-6zM1010 70.45h6v1h-6zM17 79.25h10v1h-10zM1006 79.25h10v1h-10zM17 88.05h6v1h-6zM1010 88.05h6v1h-6zM17 96.85h6v1h-6zM1010 96.85h6v1h-6zM17 105.65h6v1h-6zM1010 105.65h6v1h-6zM17 114.45h6v1h-6zM1010 114.45h6v1h-6zM17 123.25h10v1h-10zM1006 123.25h10v1h-10zM17 132.05h6v1h-6zM1010 132.05h6v1h-6zM17 140.85h6v1h-6zM1010 140.85h6v1h-6zM17 149.65h6v1h-6zM1010 149.65h6v1h-6zM17 158.45h6v1h-6zM1010 158.45h6v1h-6zM17 167.25h10v1h-10zM1006 167.25h10v1h-10zM17 176.05h6v1h-6zM1010 176.05h6v1h-6zM17 184.85h6v1h-6zM1010 184.85h6v1h-6zM17 193.65h6v1h-6zM1010 193.65h6v1h-6zM17 202.45h6v1h-6zM1010 202.45h6v1h-6zM17 211.25h10v1h-10zM1006 211.25h10v1h-10zM17 220.05h6v1h-6zM1010 220.05h6v1h-6zM17 228.85h6v1h-6zM1010 228.85h6v1h-6zM17 237.65h6v1h-6zM1010 237.65h6v1h-6zM17 246.45h6v1h-6zM1010 246.45h6v1h-6zM17 255.25h10v1h-10zM1006 255.25h10v1h-10zM17 264.05h6v1h-6zM1010 264.05h6v1h-6zM17 272.85h6v1h-6zM1010 272.85h6v1h-6zM17 281.65h6v1h-6zM1010 281.65h6v1h-6zM17 290.45h6v1h-6zM1010 290.45h6v1h-6zM17 299.25h10v1h-10zM1006 299.25h10v1h-10zM17 308.05h6v1h-6zM1010 308.05h6v1h-6zM17 316.85h6v1h-6zM1010 316.85h6v1h-6zM17 325.65h6v1h-6zM1010 325.65h6v1h-6zM17 334.45h6v1h-6zM1010 334.45h6v1h-6zM17 343.25h10v1h-10zM1006 343.25h10v1h-10zM17 352.05h6v1h-6zM1010 352.05h6v1h-6zM17 360.85h6v1h-6zM1010 360.85h6v1h-6zM17 369.65h6v1h-6zM1010 369.65h6v1h-6zM17 378.45h6v1h-6zM1010 378.45h6v1h-6zM17 387.25h10v1h-10zM1006 387.25h10v1h-10zM17 396.05h6v1h-6zM1010 396.05h6v1h-6zM17 404.85h6v1h-6zM1010 404.85h6v1h-6zM17 413.65h6v1h-6zM1010 413.65h6v1h-6zM17 422.45h6v1h-6zM1010 422.45h6v1h-6zM17 431.25h10v1h-10zM1006 431.25h10v1h-10zM17 440.05h6v1h-6zM1010 440.05h6v1h-6zM17 448.85h6v1h-6zM1010 448.85h6v1h-6zM17 457.65h6v1h-6zM1010 457.65h6v1h-6zM17 466.45h6v1h-6zM1010 466.45h6v1h-6zM17 255.15h999v1.1h-999zM516 36h1v439h-1zM36 252h1v7h-1zM56 252h1v7h-1zM76 252h1v7h-1zM96 252h1v7h-1zM116 250h1v11h-1zM136 252h1v7h-1zM156 252h1v7h-1zM176 252h1v7h-1zM196 252h1v7h-1zM216 250h1v11h-1zM236 252h1v7h-1zM256 252h1v7h-1zM276 252h1v7h-1zM296 252h1v7h-1zM316 250h1v11h-1zM336 252h1v7h-1zM356 252h1v7h-1zM376 252h1v7h-1zM396 252h1v7h-1zM416 250h1v11h-1zM436 252h1v7h-1zM456 252h1v7h-1zM476 252h1v7h-1zM496 252h1v7h-1zM516 250h1v11h-1zM536 252h1v7h-1zM556 252h1v7h-1zM576 252h1v7h-1zM596 252h1v7h-1zM616 250h1v11h-1zM636 252h1v7h-1zM656 252h1v7h-1zM676 252h1v7h-1zM696 252h1v7h-1zM716 250h1v11h-1zM736 252h1v7h-1zM756 252h1v7h-1zM776 252h1v7h-1zM796 252h1v7h-1zM816 250h1v11h-1zM836 252h1v7h-1zM856 252h1v7h-1zM876 252h1v7h-1zM896 252h1v7h-1zM916 250h1v11h-1zM936 252h1v7h-1zM956 252h1v7h-1zM976 252h1v7h-1zM996 252h1v7h-1zM513 44.05h7v1h-7zM513 52.85h7v1h-7zM513 61.65h7v1h-7zM513 70.45h7v1h-7zM511 79.25h11v1h-11zM513 88.05h7v1h-7zM513 96.85h7v1h-7zM513 105.65h7v1h-7zM513 114.45h7v1h-7zM511 123.25h11v1h-11zM513 132.05h7v1h-7zM513 140.85h7v1h-7zM513 149.65h7v1h-7zM513 158.45h7v1h-7zM511 167.25h11v1h-11zM513 176.05h7v1h-7zM513 184.85h7v1h-7zM513 193.65h7v1h-7zM513 202.45h7v1h-7zM511 211.25h11v1h-11zM513 220.05h7v1h-7zM513 228.85h7v1h-7zM513 237.65h7v1h-7zM513 246.45h7v1h-7zM511 255.25h11v1h-11zM513 264.05h7v1h-7zM513 272.85h7v1h-7zM513 281.65h7v1h-7zM513 290.45h7v1h-7zM511 299.25h11v1h-11zM513 308.05h7v1h-7zM513 316.85h7v1h-7zM513 325.65h7v1h-7zM513 334.45h7v1h-7zM511 343.25h11v1h-11zM513 352.05h7v1h-7zM513 360.85h7v1h-7zM513 369.65h7v1h-7zM513 378.45h7v1h-7zM511 387.25h11v1h-11zM513 396.05h7v1h-7zM513 404.85h7v1h-7zM513 413.65h7v1h-7zM513 422.45h7v1h-7zM511 431.25h11v1h-11zM513 440.05h7v1h-7zM513 448.85h7v1h-7zM513 457.65h7v1h-7zM513 466.45h7v1h-7z" fill="#968c6e"/>
<text x="165.0" y="108.3" font-size="12" fill="#00ee00" stroke="#00ee00" stroke-width="0.3" textLength="62.0" lengthAdjust="spacingAndGlyphs">VOUT 4V/DIV</text>
<text x="177.5" y="169.0" font-size="12" fill="#00eeee" stroke="#00eeee" stroke-width="0.3" textLength="33.0" lengthAdjust="spacingAndGlyphs">VGATE</text>
<text x="174.0" y="229.2" font-size="12" fill="#ee00ee" stroke="#ee00ee" stroke-width="0.3" textLength="32.0" lengthAdjust="spacingAndGlyphs">CS_pin</text>
<text x="178.6" y="412.5" font-size="12" fill="#eeee00" stroke="#eeee00" stroke-width="0.3" textLength="22.6" lengthAdjust="spacingAndGlyphs">SWN</text>
<path d="M34 36h11l-5.5 9.5z" fill="#ffa800"/>
<path d="M996 299.5l8.5-5v4h14.5v2h-14.5v4z" fill="#00e8e8"/>
<circle cx="10.5" cy="256.0" r="8.8" fill="#00ff00" stroke="#b8b8b8" stroke-width="2"/>
<path d="M19 255.0h5v-4l6.5 5-6.5 5v-4h-5z" fill="#00ff00"/>
<text x="10.5" y="260.0" font-size="11.5" fill="#000" text-anchor="middle">4</text>
<circle cx="10.5" cy="299.5" r="8.8" fill="#ff00ff" stroke="#b8b8b8" stroke-width="2"/>
<path d="M19 298.5h5v-4l6.5 5-6.5 5v-4h-5z" fill="#ff00ff"/>
<text x="10.5" y="303.5" font-size="11.5" fill="#000" text-anchor="middle">3</text>
<circle cx="10.5" cy="344.0" r="8.8" fill="#00f0f0" stroke="#ff9800" stroke-width="2"/>
<path d="M19 343.0h5v-4l6.5 5-6.5 5v-4h-5z" fill="#00f0f0"/>
<text x="10.5" y="348.0" font-size="11.5" fill="#000" text-anchor="middle">2</text>
<circle cx="10.5" cy="432.0" r="8.8" fill="#ffff00" stroke="#b8b8b8" stroke-width="2"/>
<path d="M19 431.0h5v-4l6.5 5-6.5 5v-4h-5z" fill="#ffff00"/>
<text x="10.5" y="436.0" font-size="11.5" fill="#000" text-anchor="middle">1</text>
<rect x="21.5" y="484.5" width="280.0" height="92.0" rx="6" fill="none" stroke="#c8c8c8" stroke-width="1.2"/>
<rect x="29.0" y="491.6" width="33.5" height="13.5" rx="6.75" fill="url(#gRim)"/>
<rect x="30.9" y="493.8" width="29.7" height="9.6" rx="4.80" fill="url(#gP1)"/>
<text class="pl" x="39.2" y="501.6">C1</text>
<text class="b" x="67.0" y="501.0">60.0V/div</text>
<text class="b" x="182.5" y="501.0">1MΩ</text>
<text class="b" y="501.0"><tspan x="215.2" dy="-3.2" font-size="9.2" font-weight="normal" textLength="4.8" lengthAdjust="spacingAndGlyphs">B</tspan><tspan x="220" dy="6.3" font-size="11.5" font-weight="normal" textLength="9.6" lengthAdjust="spacingAndGlyphs">W</tspan><tspan x="230" dy="-3">:250M</tspan></text>
<rect x="29.0" y="512.6" width="33.5" height="13.5" rx="6.75" fill="url(#gRim)"/>
<rect x="30.9" y="514.8" width="29.7" height="9.6" rx="4.80" fill="url(#gP2)"/>
<text class="pl" x="39.2" y="522.6">C2</text>
<text class="b" x="67.0" y="522.0">4.0V/div</text>
<text class="b" x="182.5" y="522.0">1MΩ</text>
<text class="b" y="522.0"><tspan x="215.2" dy="-3.2" font-size="9.2" font-weight="normal" textLength="4.8" lengthAdjust="spacingAndGlyphs">B</tspan><tspan x="220" dy="6.3" font-size="11.5" font-weight="normal" textLength="9.6" lengthAdjust="spacingAndGlyphs">W</tspan><tspan x="230" dy="-3">:20.0M</tspan></text>
<rect x="29.0" y="533.6" width="33.5" height="13.5" rx="6.75" fill="url(#gRim)"/>
<rect x="30.9" y="535.8" width="29.7" height="9.6" rx="4.80" fill="url(#gP3)"/>
<text class="pl" x="39.2" y="543.6">C3</text>
<text class="b" x="67.0" y="543.0">200mV/div</text>
<text class="b" x="182.5" y="543.0">50Ω</text>
<text class="b" y="543.0"><tspan x="215.2" dy="-3.2" font-size="9.2" font-weight="normal" textLength="4.8" lengthAdjust="spacingAndGlyphs">B</tspan><tspan x="220" dy="6.3" font-size="11.5" font-weight="normal" textLength="9.6" lengthAdjust="spacingAndGlyphs">W</tspan><tspan x="230" dy="-3">:20.0M</tspan></text>
<rect x="29.0" y="554.6" width="33.5" height="13.5" rx="6.75" fill="url(#gRim)"/>
<rect x="30.9" y="556.8" width="29.7" height="9.6" rx="4.80" fill="url(#gP4)"/>
<text class="pl" x="39.2" y="564.6">C4</text>
<text class="b" x="67.0" y="564.0">200mV/div</text>
<text class="b" x="182.5" y="564.0">1MΩ</text>
<text class="b" y="564.0"><tspan x="215.2" dy="-3.2" font-size="9.2" font-weight="normal" textLength="4.8" lengthAdjust="spacingAndGlyphs">B</tspan><tspan x="220" dy="6.3" font-size="11.5" font-weight="normal" textLength="9.6" lengthAdjust="spacingAndGlyphs">W</tspan><tspan x="230" dy="-3">:20.0M</tspan></text>
<rect x="591.5" y="484.5" width="186.0" height="23.5" rx="6" fill="none" stroke="#c8c8c8" stroke-width="1.2"/>
<rect x="597.5" y="490.7" width="15.5" height="15" fill="#c8c8c8" stroke="#ff9800" stroke-width="1.2"/>
<text x="599" y="500.8" font-size="11.5" font-weight="bold" fill="#000" textLength="9.8" lengthAdjust="spacingAndGlyphs">A'</text>
<rect x="614.5" y="491.6" width="33.5" height="13.5" rx="6.75" fill="url(#gRim)"/>
<rect x="616.4" y="493.8" width="29.7" height="9.6" rx="4.80" fill="url(#gP2)"/>
<text class="pl" x="624.8" y="501.6">C2</text>
<path d="M650.7 503.7h4l5-11.7h5.2" fill="none" stroke="#fff" stroke-width="1.7"/>
<text class="b" x="667.5" y="501.0">4.0V</text>
<rect x="781.5" y="484.5" width="231.0" height="92.5" rx="6" fill="none" stroke="#c8c8c8" stroke-width="1.2"/>
<text class="b" x="789.4" y="501.0">5.0µs/div</text>
<text class="b" x="854.0" y="501.0">2.5GS/s</text>
<text class="b" x="939.5" y="501.0">400ps/pt</text>
<text class="b" x="789.4" y="522" style="fill:#00e000">Run</text>
<text class="b" x="876.5" y="522.0">Sample</text>
<text class="b" x="789.4" y="543.0">994 acqs</text>
<text class="b" x="929.5" y="543.0">RL:125k</text>
<text class="b" x="789.4" y="564.0">Auto</text>
<rect x="992.6" y="511.5" width="3.9" height="13" rx="1.2" fill="#ffff3c"/>
<circle cx="994.5" cy="525.7" r="3.6" fill="#ffff3c"/>
<rect x="21.5" y="586.5" width="565.0" height="165.0" rx="6" fill="none" stroke="#c8c8c8" stroke-width="1.2"/>
<g class="ce">
<rect x="198" y="613" width="78" height="18" fill="#262626"/>
<rect x="348" y="613" width="68" height="18" fill="#262626"/>
<rect x="198" y="632" width="78" height="18" fill="#262626"/>
<rect x="348" y="632" width="68" height="18" fill="#262626"/>
<rect x="198" y="651" width="78" height="18" fill="#262626"/>
<rect x="348" y="651" width="68" height="18" fill="#262626"/>
<rect x="198" y="670" width="78" height="18" fill="#262626"/>
<rect x="348" y="670" width="68" height="18" fill="#262626"/>
<rect x="198" y="689" width="78" height="18" fill="#262626"/>
<rect x="348" y="689" width="68" height="18" fill="#262626"/>
<rect x="198" y="708" width="78" height="18" fill="#262626"/>
<rect x="348" y="708" width="68" height="18" fill="#262626"/>
<rect x="198" y="727" width="78" height="18" fill="#262626"/>
<rect x="348" y="727" width="68" height="18" fill="#262626"/>
<path d="M127 612h457v1h-457zM127 631h457v1h-457zM127 650h457v1h-457zM127 669h457v1h-457zM127 688h457v1h-457zM127 707h457v1h-457zM127 726h457v1h-457zM127 745h457v1h-457zM127 612h1v134h-1zM197 612h1v134h-1zM277 612h1v134h-1zM347 612h1v134h-1zM417 612h1v134h-1zM487 612h1v134h-1zM547 612h1v134h-1zM583 612h1v134h-1z" fill="#c8c8c8"/>
</g>
<text class="b" x="161.6" y="605.5" text-anchor="middle">Value</text>
<text class="b" x="236.6" y="605.5" text-anchor="middle">Mean</text>
<text class="b" x="311.7" y="605.5" text-anchor="middle">Min</text>
<text class="b" x="382.0" y="605.5" text-anchor="middle">Max</text>
<text class="b" x="451.5" y="605.5" text-anchor="middle">St Dev</text>
<text class="b" x="516.8" y="605.5" text-anchor="middle">Count</text>
<text class="b" x="564.6" y="605.5" text-anchor="middle">Info</text>
<rect x="29.0" y="613.9" width="33.5" height="13.5" rx="6.75" fill="url(#gRim)"/>
<rect x="30.9" y="616.0" width="29.7" height="9.6" rx="4.80" fill="url(#gP2)"/>
<text class="pl" x="39.2" y="623.8">C2</text>
<text class="b" x="69.3" y="625.6">Max</text>
<text class="b" x="129.6" y="625.6">19.04V</text>
<text class="b" x="199.6" y="625.6">19.035225</text>
<text class="b" x="279.6" y="625.6">18.88</text>
<text class="b" x="349.6" y="625.6">19.2</text>
<text class="b" x="419.6" y="625.6">27.72m</text>
<text class="b" x="489.6" y="625.6">997.0</text>
<rect x="29.0" y="632.9" width="33.5" height="13.5" rx="6.75" fill="url(#gRim)"/>
<rect x="30.9" y="635.0" width="29.7" height="9.6" rx="4.80" fill="url(#gP2)"/>
<text class="pl" x="39.2" y="642.8">C2</text>
<text class="b" x="69.3" y="644.6">Freq</text>
<text class="b" x="129.6" y="644.6">42.49kHz</text>
<text class="b" x="199.6" y="644.6">42.485547k</text>
<text class="b" x="279.6" y="644.6">42.45k</text>
<text class="b" x="349.6" y="644.6">42.52k</text>
<text class="b" x="419.6" y="644.6">9.768</text>
<text class="b" x="489.6" y="644.6">997.0</text>
<rect x="29.0" y="651.9" width="33.5" height="13.5" rx="6.75" fill="url(#gRim)"/>
<rect x="30.9" y="654.0" width="29.7" height="9.6" rx="4.80" fill="url(#gP2)"/>
<text class="pl" x="39.2" y="661.8">C2</text>
<text class="b" x="69.3" y="663.6">+DtyCyc</text>
<text class="b" x="129.6" y="663.6">67.99%</text>
<text class="b" x="199.6" y="663.6">68.06954</text>
<text class="b" x="279.6" y="663.6">67.49</text>
<text class="b" x="349.6" y="663.6">68.74</text>
<text class="b" x="419.6" y="663.6">200.5m</text>
<text class="b" x="489.6" y="663.6">997.0</text>
<rect x="29.0" y="670.9" width="33.5" height="13.5" rx="6.75" fill="url(#gRim)"/>
<rect x="30.9" y="673.0" width="29.7" height="9.6" rx="4.80" fill="url(#gP4)"/>
<text class="pl" x="39.2" y="680.8">C4</text>
<text class="b" x="69.3" y="682.6">Mean</text>
<text class="b" x="129.6" y="682.6">788.9mV</text>
<text class="b" x="199.6" y="682.6">788.94152m</text>
<text class="b" x="279.6" y="682.6">788.5m</text>
<text class="b" x="349.6" y="682.6">789.8m</text>
<text class="b" x="419.6" y="682.6">170.1µ</text>
<text class="b" x="489.6" y="682.6">997.0</text>
<rect x="29.0" y="689.9" width="33.5" height="13.5" rx="6.75" fill="url(#gRim)"/>
<rect x="30.9" y="692.0" width="29.7" height="9.6" rx="4.80" fill="url(#gP3)"/>
<text class="pl" x="39.2" y="699.8">C3</text>
<text class="b" x="69.3" y="701.6">Max</text>
<text class="b" x="129.6" y="701.6">640.0mV</text>
<text class="b" x="199.6" y="701.6">616.58363m</text>
<text class="b" x="279.6" y="701.6">584.0m</text>
<text class="b" x="349.6" y="701.6">664.0m</text>
<text class="b" x="419.6" y="701.6">22.55m</text>
<text class="b" x="489.6" y="701.6">997.0</text>
<rect x="29.0" y="708.9" width="33.5" height="13.5" rx="6.75" fill="url(#gRim)"/>
<rect x="30.9" y="711.0" width="29.7" height="9.6" rx="4.80" fill="url(#gP3)"/>
<text class="pl" x="39.2" y="718.8">C3</text>
<text class="b" x="69.3" y="720.6">Min</text>
<text class="b" x="129.6" y="720.6">-112.0mV</text>
<text class="b" x="199.6" y="720.6">-108.46006m</text>
<text class="b" x="279.6" y="720.6">-128.0m</text>
<text class="b" x="349.6" y="720.6">-88.0m</text>
<text class="b" x="419.6" y="720.6">6.937m</text>
<text class="b" x="489.6" y="720.6">997.0</text>
<rect x="29.0" y="727.9" width="33.5" height="13.5" rx="6.75" fill="url(#gRim)"/>
<rect x="30.9" y="730.0" width="29.7" height="9.6" rx="4.80" fill="url(#gP2)"/>
<text class="pl" x="39.2" y="737.8">C2</text>
<text class="b" x="69.3" y="739.6">Pos Wid</text>
<text class="b" x="129.6" y="739.6">16.0µs</text>
<text class="b" x="199.6" y="739.6">16.021809µ</text>
<text class="b" x="279.6" y="739.6">15.89µ</text>
<text class="b" x="349.6" y="739.6">16.18µ</text>
<text class="b" x="419.6" y="739.6">46.25n</text>
<text class="b" x="489.6" y="739.6">997.0</text>
</svg></body></html>
